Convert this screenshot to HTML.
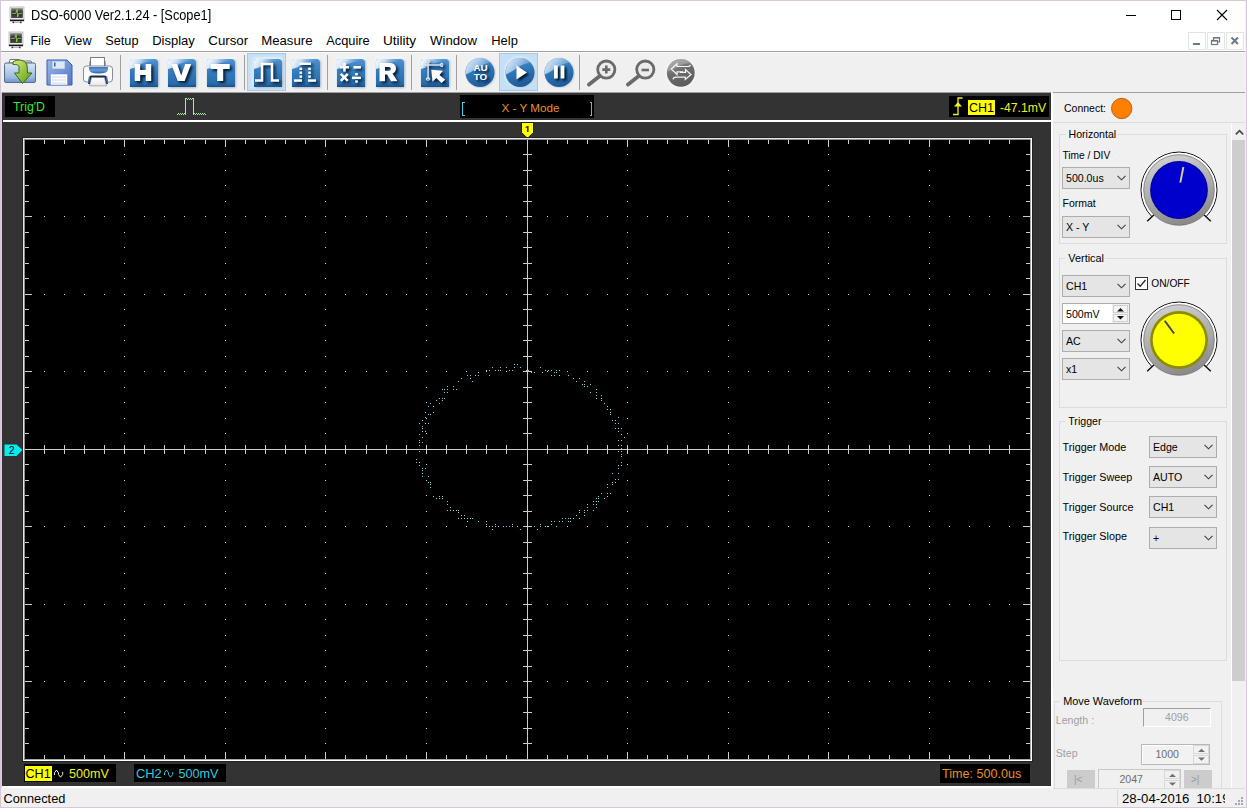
<!DOCTYPE html><html><head><meta charset="utf-8"><style>
*{margin:0;padding:0;box-sizing:border-box}
html,body{width:1247px;height:808px;overflow:hidden;background:#fff;font-family:"Liberation Sans",sans-serif}
.t{position:absolute;line-height:1;white-space:nowrap}
.r{position:absolute}
svg{position:absolute;left:0;top:0}
</style></head><body><div class="r" style="left:0px;top:0px;width:1247px;height:808px;background:#ffffff"></div>
<svg style="left:6px;top:4px" width="22" height="22" viewBox="0 0 22 22">
<defs><linearGradient id="mg64" x1="0" y1="0" x2="0" y2="1"><stop offset="0" stop-color="#8a8a8a"/><stop offset="0.45" stop-color="#262626"/><stop offset="1" stop-color="#4a4a4a"/></linearGradient></defs>
<rect x="4" y="3" width="14" height="14" fill="#ececec" stroke="#a0a0a0" stroke-width="0.6"/>
<rect x="5.2" y="4.2" width="11.6" height="9.8" fill="url(#mg64)"/>
<path d="M5.8 9.3 H9.8 L10.6 7 L11.1 5.2 L11.6 13 L12.4 10.2 L12.9 9.3 H16.2" fill="none" stroke="#86c850" stroke-width="1"/>
<rect x="4" y="15.6" width="14" height="1.5" fill="#141414"/>
<rect x="7" y="18" width="8" height="1" fill="#b8b8b8"/>
<rect x="6.5" y="17.6" width="1.6" height="1.6" fill="#333"/><rect x="14" y="17.6" width="1.6" height="1.6" fill="#333"/>
</svg>
<svg style="left:5px;top:29px" width="22" height="22" viewBox="0 0 22 22">
<defs><linearGradient id="mg529" x1="0" y1="0" x2="0" y2="1"><stop offset="0" stop-color="#8a8a8a"/><stop offset="0.45" stop-color="#262626"/><stop offset="1" stop-color="#4a4a4a"/></linearGradient></defs>
<rect x="4" y="3" width="14" height="14" fill="#ececec" stroke="#a0a0a0" stroke-width="0.6"/>
<rect x="5.2" y="4.2" width="11.6" height="9.8" fill="url(#mg529)"/>
<path d="M5.8 9.3 H9.8 L10.6 7 L11.1 5.2 L11.6 13 L12.4 10.2 L12.9 9.3 H16.2" fill="none" stroke="#86c850" stroke-width="1"/>
<rect x="4" y="15.6" width="14" height="1.5" fill="#141414"/>
<rect x="7" y="18" width="8" height="1" fill="#b8b8b8"/>
<rect x="6.5" y="17.6" width="1.6" height="1.6" fill="#333"/><rect x="14" y="17.6" width="1.6" height="1.6" fill="#333"/>
</svg>
<div class="t " style="left:30.5px;top:8.67px;font-size:13.8px;color:#000;transform:scaleX(0.925);transform-origin:0 0">DSO-6000 Ver2.1.24 - [Scope1]</div>
<div class="r" style="left:1126px;top:15px;width:10px;height:1px;background:#000"></div>
<div class="r" style="left:1171px;top:10px;width:10px;height:10px;border:1px solid #000"></div>
<svg style="left:1216px;top:9px" width="12" height="12" viewBox="0 0 12 12"><path d="M1 1 L11 11 M11 1 L1 11" stroke="#000" stroke-width="1.1"/></svg>
<div class="t " style="left:30.6px;top:34.96px;font-size:12.4px;color:#000;">File</div>
<div class="t " style="left:64.3px;top:34.70px;font-size:12.7px;color:#000;">View</div>
<div class="t " style="left:105.3px;top:34.70px;font-size:12.7px;color:#000;">Setup</div>
<div class="t " style="left:152.2px;top:34.45px;font-size:13.0px;color:#000;">Display</div>
<div class="t " style="left:208.3px;top:34.20px;font-size:13.3px;color:#000;">Cursor</div>
<div class="t " style="left:261.2px;top:34.28px;font-size:13.2px;color:#000;">Measure</div>
<div class="t " style="left:326.3px;top:34.62px;font-size:12.8px;color:#000;">Acquire</div>
<div class="t " style="left:382.9px;top:33.94px;font-size:13.6px;color:#000;">Utility</div>
<div class="t " style="left:430px;top:34.28px;font-size:13.2px;color:#000;">Window</div>
<div class="t " style="left:491.3px;top:34.53px;font-size:12.9px;color:#000;">Help</div>
<div class="r" style="left:1188px;top:32px;width:18px;height:18px;border:1px solid #e3e3e3;background:#fff"></div>
<div class="r" style="left:1207px;top:32px;width:18px;height:18px;border:1px solid #e3e3e3;background:#fff"></div>
<div class="r" style="left:1226px;top:32px;width:18px;height:18px;border:1px solid #e3e3e3;background:#fff"></div>
<div class="r" style="left:1193px;top:43px;width:7px;height:2px;background:#6d7885"></div>
<svg style="left:1210px;top:36px" width="12" height="10" viewBox="0 0 12 10"><rect x="1.5" y="4.5" width="6" height="4" fill="none" stroke="#6d7885" stroke-width="1.2"/><path d="M3.5 4.5 V1.5 H9.5 V6 H7.5" fill="none" stroke="#6d7885" stroke-width="1.2"/><rect x="1" y="4" width="7" height="1.6" fill="#6d7885"/><rect x="3" y="1" width="7" height="1.6" fill="#6d7885"/></svg>
<svg style="left:1229px;top:35px" width="12" height="12" viewBox="0 0 12 12"><path d="M2.5 2.5 L9 9 M9 2.5 L2.5 9" stroke="#6d7885" stroke-width="2"/></svg>
<div class="r" style="left:0px;top:51px;width:1247px;height:1px;background:#a0a0a0"></div>
<div class="r" style="left:1px;top:52px;width:1246px;height:41px;background:#f0f0f0"></div>
<div class="r" style="left:1px;top:52px;width:1245px;height:1px;background:#fbfbfb"></div>
<div class="r" style="left:120px;top:55px;width:1px;height:35px;background:#a0a0a0"></div>
<div class="r" style="left:244px;top:55px;width:1px;height:35px;background:#a0a0a0"></div>
<div class="r" style="left:327px;top:55px;width:1px;height:35px;background:#a0a0a0"></div>
<div class="r" style="left:411px;top:55px;width:1px;height:35px;background:#a0a0a0"></div>
<div class="r" style="left:456px;top:55px;width:1px;height:35px;background:#a0a0a0"></div>
<div class="r" style="left:579px;top:55px;width:1px;height:35px;background:#a0a0a0"></div>
<div class="r" style="left:247px;top:53px;width:39px;height:38px;background:#c5e0f5;border:1px solid #a4c8e6"></div>
<div class="r" style="left:499px;top:53px;width:39px;height:38px;background:#c5e0f5;border:1px solid #a4c8e6"></div>
<svg style="left:3px;top:56px" width="34" height="30" viewBox="0 0 34 30">
<defs>
<linearGradient id="fold" x1="0" y1="0" x2="0" y2="1"><stop offset="0" stop-color="#d8e6f4"/><stop offset="0.6" stop-color="#9dbde4"/><stop offset="1" stop-color="#6f9bd2"/></linearGradient>
<linearGradient id="arr" x1="0" y1="0" x2="1" y2="1"><stop offset="0" stop-color="#d6ee7a"/><stop offset="1" stop-color="#5a9a10"/></linearGradient>
</defs>
<path d="M7 3.5 H16 L17 5 H28 L29 7 H6 Z" fill="#fafafa" stroke="#777" stroke-width="1"/>
<rect x="1.5" y="7" width="31" height="19.5" rx="1.5" fill="url(#fold)" stroke="#5a6d86" stroke-width="1"/>
<g stroke="#ffffff" stroke-opacity="0.35" stroke-width="0.6">
<path d="M3 10H31M3 12H31M3 14H31M3 16H31M3 18H31M3 20H31M3 22H31"/></g>
<path d="M10 6 C14 3, 22 3, 24 9 L24.5 17 H29 L19.5 27.5 L11.5 17 H16 L16 11 C16 8.5, 13 8.5, 10 8.5 Z" fill="url(#arr)" stroke="#3b6a12" stroke-width="1"/>
</svg>
<svg style="left:46px;top:59px" width="27" height="27" viewBox="0 0 27 27">
<defs><linearGradient id="flp" x1="0" y1="0" x2="1" y2="1"><stop offset="0" stop-color="#9ab7e8"/><stop offset="1" stop-color="#4f78c8"/></linearGradient></defs>
<path d="M1 1 H21 L26 6 V26 H1 Z" fill="url(#flp)" stroke="#3a5fb0" stroke-width="1"/>
<rect x="6" y="2" width="13" height="8" fill="#dfe8f6" stroke="#7d9bd0" stroke-width="0.6"/>
<rect x="8" y="3.5" width="1.5" height="4" fill="#3a5fb0"/>
<rect x="4.5" y="15" width="17" height="11" fill="#ffffff" stroke="#6e8fce" stroke-width="0.6"/>
<path d="M6 18H20M6 21H20M6 24H20" stroke="#c0cce6" stroke-width="0.8"/>
</svg>
<svg style="left:78px;top:52px" width="40" height="40" viewBox="0 0 40 40">
<defs><linearGradient id="prt" x1="0" y1="0" x2="0" y2="1"><stop offset="0" stop-color="#3f74bd"/><stop offset="0.5" stop-color="#6a9ad6"/><stop offset="1" stop-color="#2c5fa6"/></linearGradient>
<linearGradient id="ppr" x1="0" y1="0" x2="0" y2="1"><stop offset="0" stop-color="#fff"/><stop offset="1" stop-color="#e8e8e8"/></linearGradient></defs>
<rect x="11.5" y="8.5" width="16" height="14" rx="1.5" fill="#3c6db5"/>
<rect x="12.6" y="5.5" width="13.8" height="9.5" fill="#fff" stroke="#6a6f78" stroke-width="0.9"/>
<rect x="5.5" y="14" width="29" height="16" rx="3" fill="#fcfcfc" stroke="#7a808a" stroke-width="0.9"/>
<path d="M11 15 H30 V17 Q30 21.5 20.5 21.5 Q11 21.5 11 17 Z" fill="url(#prt)"/>
<path d="M11.5 24.5 Q12 23.5 14 23.5 H26 Q28 23.5 28.5 24.5 L30 32 H10 Z" fill="#1a2a40"/>
<path d="M13.5 25.5 H26.5 L28.5 33.8 H11.5 Z" fill="url(#ppr)" stroke="#7a808a" stroke-width="0.6"/>
<path d="M11.6 25 L10.6 31 M28.4 25 L29.4 31" stroke="#3a6ab0" stroke-width="1.6"/>
</svg>
<svg style="left:125.5px;top:54.5px" width="36" height="36" viewBox="-4 -4 36 36">
<defs>
<linearGradient id="bqh" x1="0" y1="0" x2="0" y2="1"><stop offset="0" stop-color="#4c90d0"/><stop offset="0.55" stop-color="#3079ba"/><stop offset="0.88" stop-color="#2a6cab"/><stop offset="1" stop-color="#1a4f86"/></linearGradient>
<linearGradient id="hlh" x1="0" y1="0" x2="1" y2="0.2"><stop offset="0" stop-color="#ffffff" stop-opacity="1"/><stop offset="0.35" stop-color="#dceaf8" stop-opacity="0.85"/><stop offset="0.75" stop-color="#7fb0e0" stop-opacity="0.3"/><stop offset="1" stop-color="#4c90d0" stop-opacity="0"/></linearGradient>
<filter id="glh" x="-30%" y="-30%" width="160%" height="160%"><feGaussianBlur stdDeviation="1"/></filter>
<filter id="shh" x="-30%" y="-30%" width="160%" height="160%"><feGaussianBlur in="SourceAlpha" stdDeviation="1.4" result="b"/><feOffset in="b" dx="1.6" dy="1.6" result="o"/><feFlood flood-color="#041526" flood-opacity="1"/><feComposite operator="in" in2="o"/></filter>
</defs>
<rect x="-1.5" y="-1.5" width="31" height="31" rx="4" fill="#f4f9ff" opacity="0.9" filter="url(#glh)"/>
<rect x="0.5" y="1" width="28.5" height="28" rx="2" fill="#1d3c5c" opacity="0.35" filter="url(#glh)"/>
<path d="M0 3 Q0 0 3 0 H24 Q28 0 28 4 V28 H0 Z" fill="url(#bqh)"/>
<path d="M0 3 Q0 0 3 0 H24 Q28 0 28 2.5 Q16 1.5 8 7 Q5 9 0 10 Z" fill="url(#hlh)"/>
<g transform="translate(-2,-2)"><g filter="url(#shh)"><path transform="translate(-0.8,-0.6)" d="M7.5 7.5 H13 V13.5 H18.5 V7.5 H24 V24.5 H18.5 V18.5 H13 V24.5 H7.5 Z" fill="#fff"/></g><path transform="translate(-0.8,-0.6)" d="M7.5 7.5 H13 V13.5 H18.5 V7.5 H24 V24.5 H18.5 V18.5 H13 V24.5 H7.5 Z" fill="#fff"/></g>
</svg>
<svg style="left:164.3px;top:54.5px" width="36" height="36" viewBox="-4 -4 36 36">
<defs>
<linearGradient id="bqv" x1="0" y1="0" x2="0" y2="1"><stop offset="0" stop-color="#4c90d0"/><stop offset="0.55" stop-color="#3079ba"/><stop offset="0.88" stop-color="#2a6cab"/><stop offset="1" stop-color="#1a4f86"/></linearGradient>
<linearGradient id="hlv" x1="0" y1="0" x2="1" y2="0.2"><stop offset="0" stop-color="#ffffff" stop-opacity="1"/><stop offset="0.35" stop-color="#dceaf8" stop-opacity="0.85"/><stop offset="0.75" stop-color="#7fb0e0" stop-opacity="0.3"/><stop offset="1" stop-color="#4c90d0" stop-opacity="0"/></linearGradient>
<filter id="glv" x="-30%" y="-30%" width="160%" height="160%"><feGaussianBlur stdDeviation="1"/></filter>
<filter id="shv" x="-30%" y="-30%" width="160%" height="160%"><feGaussianBlur in="SourceAlpha" stdDeviation="1.4" result="b"/><feOffset in="b" dx="1.6" dy="1.6" result="o"/><feFlood flood-color="#041526" flood-opacity="1"/><feComposite operator="in" in2="o"/></filter>
</defs>
<rect x="-1.5" y="-1.5" width="31" height="31" rx="4" fill="#f4f9ff" opacity="0.9" filter="url(#glv)"/>
<rect x="0.5" y="1" width="28.5" height="28" rx="2" fill="#1d3c5c" opacity="0.35" filter="url(#glv)"/>
<path d="M0 3 Q0 0 3 0 H24 Q28 0 28 4 V28 H0 Z" fill="url(#bqv)"/>
<path d="M0 3 Q0 0 3 0 H24 Q28 0 28 2.5 Q16 1.5 8 7 Q5 9 0 10 Z" fill="url(#hlv)"/>
<g transform="translate(-2,-2)"><g filter="url(#shv)"><path transform="translate(-0.8,-0.6)" d="M6 7.5 H12 L16 19 L20 7.5 H26 L19.5 24.5 H12.5 Z" fill="#fff"/></g><path transform="translate(-0.8,-0.6)" d="M6 7.5 H12 L16 19 L20 7.5 H26 L19.5 24.5 H12.5 Z" fill="#fff"/></g>
</svg>
<svg style="left:203px;top:54.5px" width="36" height="36" viewBox="-4 -4 36 36">
<defs>
<linearGradient id="bqt" x1="0" y1="0" x2="0" y2="1"><stop offset="0" stop-color="#4c90d0"/><stop offset="0.55" stop-color="#3079ba"/><stop offset="0.88" stop-color="#2a6cab"/><stop offset="1" stop-color="#1a4f86"/></linearGradient>
<linearGradient id="hlt" x1="0" y1="0" x2="1" y2="0.2"><stop offset="0" stop-color="#ffffff" stop-opacity="1"/><stop offset="0.35" stop-color="#dceaf8" stop-opacity="0.85"/><stop offset="0.75" stop-color="#7fb0e0" stop-opacity="0.3"/><stop offset="1" stop-color="#4c90d0" stop-opacity="0"/></linearGradient>
<filter id="glt" x="-30%" y="-30%" width="160%" height="160%"><feGaussianBlur stdDeviation="1"/></filter>
<filter id="sht" x="-30%" y="-30%" width="160%" height="160%"><feGaussianBlur in="SourceAlpha" stdDeviation="1.4" result="b"/><feOffset in="b" dx="1.6" dy="1.6" result="o"/><feFlood flood-color="#041526" flood-opacity="1"/><feComposite operator="in" in2="o"/></filter>
</defs>
<rect x="-1.5" y="-1.5" width="31" height="31" rx="4" fill="#f4f9ff" opacity="0.9" filter="url(#glt)"/>
<rect x="0.5" y="1" width="28.5" height="28" rx="2" fill="#1d3c5c" opacity="0.35" filter="url(#glt)"/>
<path d="M0 3 Q0 0 3 0 H24 Q28 0 28 4 V28 H0 Z" fill="url(#bqt)"/>
<path d="M0 3 Q0 0 3 0 H24 Q28 0 28 2.5 Q16 1.5 8 7 Q5 9 0 10 Z" fill="url(#hlt)"/>
<g transform="translate(-2,-2)"><g filter="url(#sht)"><path transform="translate(-0.8,-0.6)" d="M6.5 7.5 H25.5 V12.5 H19 V24.5 H13 V12.5 H6.5 Z" fill="#fff"/></g><path transform="translate(-0.8,-0.6)" d="M6.5 7.5 H25.5 V12.5 H19 V24.5 H13 V12.5 H6.5 Z" fill="#fff"/></g>
</svg>
<svg style="left:249.5px;top:55px" width="36" height="36" viewBox="-4 -4 36 36">
<defs>
<linearGradient id="bqsq" x1="0" y1="0" x2="0" y2="1"><stop offset="0" stop-color="#4c90d0"/><stop offset="0.55" stop-color="#3079ba"/><stop offset="0.88" stop-color="#2a6cab"/><stop offset="1" stop-color="#1a4f86"/></linearGradient>
<linearGradient id="hlsq" x1="0" y1="0" x2="1" y2="0.2"><stop offset="0" stop-color="#ffffff" stop-opacity="1"/><stop offset="0.35" stop-color="#dceaf8" stop-opacity="0.85"/><stop offset="0.75" stop-color="#7fb0e0" stop-opacity="0.3"/><stop offset="1" stop-color="#4c90d0" stop-opacity="0"/></linearGradient>
<filter id="glsq" x="-30%" y="-30%" width="160%" height="160%"><feGaussianBlur stdDeviation="1"/></filter>
<filter id="shsq" x="-30%" y="-30%" width="160%" height="160%"><feGaussianBlur in="SourceAlpha" stdDeviation="1.4" result="b"/><feOffset in="b" dx="1.6" dy="1.6" result="o"/><feFlood flood-color="#041526" flood-opacity="1"/><feComposite operator="in" in2="o"/></filter>
</defs>
<rect x="-1.5" y="-1.5" width="31" height="31" rx="4" fill="#f4f9ff" opacity="0.9" filter="url(#glsq)"/>
<rect x="0.5" y="1" width="28.5" height="28" rx="2" fill="#1d3c5c" opacity="0.35" filter="url(#glsq)"/>
<path d="M0 3 Q0 0 3 0 H24 Q28 0 28 4 V28 H0 Z" fill="url(#bqsq)"/>
<path d="M0 3 Q0 0 3 0 H24 Q28 0 28 2.5 Q16 1.5 8 7 Q5 9 0 10 Z" fill="url(#hlsq)"/>
<g transform="translate(-2,-2)"><g filter="url(#shsq)"><path d="M3 23.5 H10 V7 H20 V23.5 H27" fill="none" stroke="#fff" stroke-width="2.5"/></g><path d="M3 23.5 H10 V7 H20 V23.5 H27" fill="none" stroke="#fff" stroke-width="2.5"/></g>
</svg>
<svg style="left:287.5px;top:55px" width="36" height="36" viewBox="-4 -4 36 36">
<defs>
<linearGradient id="bqdsq" x1="0" y1="0" x2="0" y2="1"><stop offset="0" stop-color="#4c90d0"/><stop offset="0.55" stop-color="#3079ba"/><stop offset="0.88" stop-color="#2a6cab"/><stop offset="1" stop-color="#1a4f86"/></linearGradient>
<linearGradient id="hldsq" x1="0" y1="0" x2="1" y2="0.2"><stop offset="0" stop-color="#ffffff" stop-opacity="1"/><stop offset="0.35" stop-color="#dceaf8" stop-opacity="0.85"/><stop offset="0.75" stop-color="#7fb0e0" stop-opacity="0.3"/><stop offset="1" stop-color="#4c90d0" stop-opacity="0"/></linearGradient>
<filter id="gldsq" x="-30%" y="-30%" width="160%" height="160%"><feGaussianBlur stdDeviation="1"/></filter>
<filter id="shdsq" x="-30%" y="-30%" width="160%" height="160%"><feGaussianBlur in="SourceAlpha" stdDeviation="1.4" result="b"/><feOffset in="b" dx="1.6" dy="1.6" result="o"/><feFlood flood-color="#041526" flood-opacity="1"/><feComposite operator="in" in2="o"/></filter>
</defs>
<rect x="-1.5" y="-1.5" width="31" height="31" rx="4" fill="#f4f9ff" opacity="0.9" filter="url(#gldsq)"/>
<rect x="0.5" y="1" width="28.5" height="28" rx="2" fill="#1d3c5c" opacity="0.35" filter="url(#gldsq)"/>
<path d="M0 3 Q0 0 3 0 H24 Q28 0 28 4 V28 H0 Z" fill="url(#bqdsq)"/>
<path d="M0 3 Q0 0 3 0 H24 Q28 0 28 2.5 Q16 1.5 8 7 Q5 9 0 10 Z" fill="url(#hldsq)"/>
<g transform="translate(-2,-2)"><g filter="url(#shdsq)"><g fill="#fff"><rect x="4" y="22.3" width="8" height="2.5"/><rect x="18" y="22.3" width="8" height="2.5"/><rect x="9.5" y="5.5" width="11.5" height="2.5"/><rect x="9.5" y="10.6" width="2.6" height="2.4"/><rect x="9.5" y="14.5" width="2.6" height="2.4"/><rect x="9.5" y="18.4" width="2.6" height="2.4"/><rect x="18.2" y="10.6" width="2.6" height="2.4"/><rect x="18.2" y="14.5" width="2.6" height="2.4"/><rect x="18.2" y="18.4" width="2.6" height="2.4"/></g></g><g fill="#fff"><rect x="4" y="22.3" width="8" height="2.5"/><rect x="18" y="22.3" width="8" height="2.5"/><rect x="9.5" y="5.5" width="11.5" height="2.5"/><rect x="9.5" y="10.6" width="2.6" height="2.4"/><rect x="9.5" y="14.5" width="2.6" height="2.4"/><rect x="9.5" y="18.4" width="2.6" height="2.4"/><rect x="18.2" y="10.6" width="2.6" height="2.4"/><rect x="18.2" y="14.5" width="2.6" height="2.4"/><rect x="18.2" y="18.4" width="2.6" height="2.4"/></g></g>
</svg>
<svg style="left:332.5px;top:55px" width="36" height="36" viewBox="-4 -4 36 36">
<defs>
<linearGradient id="bqmath" x1="0" y1="0" x2="0" y2="1"><stop offset="0" stop-color="#4c90d0"/><stop offset="0.55" stop-color="#3079ba"/><stop offset="0.88" stop-color="#2a6cab"/><stop offset="1" stop-color="#1a4f86"/></linearGradient>
<linearGradient id="hlmath" x1="0" y1="0" x2="1" y2="0.2"><stop offset="0" stop-color="#ffffff" stop-opacity="1"/><stop offset="0.35" stop-color="#dceaf8" stop-opacity="0.85"/><stop offset="0.75" stop-color="#7fb0e0" stop-opacity="0.3"/><stop offset="1" stop-color="#4c90d0" stop-opacity="0"/></linearGradient>
<filter id="glmath" x="-30%" y="-30%" width="160%" height="160%"><feGaussianBlur stdDeviation="1"/></filter>
<filter id="shmath" x="-30%" y="-30%" width="160%" height="160%"><feGaussianBlur in="SourceAlpha" stdDeviation="1.4" result="b"/><feOffset in="b" dx="1.6" dy="1.6" result="o"/><feFlood flood-color="#041526" flood-opacity="1"/><feComposite operator="in" in2="o"/></filter>
</defs>
<rect x="-1.5" y="-1.5" width="31" height="31" rx="4" fill="#f4f9ff" opacity="0.9" filter="url(#glmath)"/>
<rect x="0.5" y="1" width="28.5" height="28" rx="2" fill="#1d3c5c" opacity="0.35" filter="url(#glmath)"/>
<path d="M0 3 Q0 0 3 0 H24 Q28 0 28 4 V28 H0 Z" fill="url(#bqmath)"/>
<path d="M0 3 Q0 0 3 0 H24 Q28 0 28 2.5 Q16 1.5 8 7 Q5 9 0 10 Z" fill="url(#hlmath)"/>
<g transform="translate(-2,-2)"><g filter="url(#shmath)"><g fill="#fff"><rect x="5" y="8.9" width="9" height="2.6"/><rect x="8.2" y="5.8" width="2.6" height="8.8"/><rect x="18.5" y="9" width="7.5" height="2.6"/><path d="M5.8 16.8 L12.8 23.8 M12.8 16.8 L5.8 23.8" stroke="#fff" stroke-width="2.6"/><rect x="17" y="19.6" width="9" height="2.5"/><rect x="20.2" y="16" width="2.6" height="2.4"/><rect x="20.2" y="23.3" width="2.6" height="2.4"/></g></g><g fill="#fff"><rect x="5" y="8.9" width="9" height="2.6"/><rect x="8.2" y="5.8" width="2.6" height="8.8"/><rect x="18.5" y="9" width="7.5" height="2.6"/><path d="M5.8 16.8 L12.8 23.8 M12.8 16.8 L5.8 23.8" stroke="#fff" stroke-width="2.6"/><rect x="17" y="19.6" width="9" height="2.5"/><rect x="20.2" y="16" width="2.6" height="2.4"/><rect x="20.2" y="23.3" width="2.6" height="2.4"/></g></g>
</svg>
<svg style="left:371.5px;top:55px" width="36" height="36" viewBox="-4 -4 36 36">
<defs>
<linearGradient id="bqr" x1="0" y1="0" x2="0" y2="1"><stop offset="0" stop-color="#4c90d0"/><stop offset="0.55" stop-color="#3079ba"/><stop offset="0.88" stop-color="#2a6cab"/><stop offset="1" stop-color="#1a4f86"/></linearGradient>
<linearGradient id="hlr" x1="0" y1="0" x2="1" y2="0.2"><stop offset="0" stop-color="#ffffff" stop-opacity="1"/><stop offset="0.35" stop-color="#dceaf8" stop-opacity="0.85"/><stop offset="0.75" stop-color="#7fb0e0" stop-opacity="0.3"/><stop offset="1" stop-color="#4c90d0" stop-opacity="0"/></linearGradient>
<filter id="glr" x="-30%" y="-30%" width="160%" height="160%"><feGaussianBlur stdDeviation="1"/></filter>
<filter id="shr" x="-30%" y="-30%" width="160%" height="160%"><feGaussianBlur in="SourceAlpha" stdDeviation="1.4" result="b"/><feOffset in="b" dx="1.6" dy="1.6" result="o"/><feFlood flood-color="#041526" flood-opacity="1"/><feComposite operator="in" in2="o"/></filter>
</defs>
<rect x="-1.5" y="-1.5" width="31" height="31" rx="4" fill="#f4f9ff" opacity="0.9" filter="url(#glr)"/>
<rect x="0.5" y="1" width="28.5" height="28" rx="2" fill="#1d3c5c" opacity="0.35" filter="url(#glr)"/>
<path d="M0 3 Q0 0 3 0 H24 Q28 0 28 4 V28 H0 Z" fill="url(#bqr)"/>
<path d="M0 3 Q0 0 3 0 H24 Q28 0 28 2.5 Q16 1.5 8 7 Q5 9 0 10 Z" fill="url(#hlr)"/>
<g transform="translate(-2,-2)"><g filter="url(#shr)"><path d="M5.5 6 H15.5 Q22 6 22 11.5 Q22 15 18.5 16.5 L23.5 24.3 H17 L13 17.5 H11 V24.3 H5.5 Z M11 10 V13.8 H15 Q16.8 13.8 16.8 11.9 Q16.8 10 15 10 Z" fill="#fff" fill-rule="evenodd"/></g><path d="M5.5 6 H15.5 Q22 6 22 11.5 Q22 15 18.5 16.5 L23.5 24.3 H17 L13 17.5 H11 V24.3 H5.5 Z M11 10 V13.8 H15 Q16.8 13.8 16.8 11.9 Q16.8 10 15 10 Z" fill="#fff" fill-rule="evenodd"/></g>
</svg>
<svg style="left:416.5px;top:55px" width="36" height="36" viewBox="-4 -4 36 36">
<defs>
<linearGradient id="bqcur" x1="0" y1="0" x2="0" y2="1"><stop offset="0" stop-color="#4c90d0"/><stop offset="0.55" stop-color="#3079ba"/><stop offset="0.88" stop-color="#2a6cab"/><stop offset="1" stop-color="#1a4f86"/></linearGradient>
<linearGradient id="hlcur" x1="0" y1="0" x2="1" y2="0.2"><stop offset="0" stop-color="#ffffff" stop-opacity="1"/><stop offset="0.35" stop-color="#dceaf8" stop-opacity="0.85"/><stop offset="0.75" stop-color="#7fb0e0" stop-opacity="0.3"/><stop offset="1" stop-color="#4c90d0" stop-opacity="0"/></linearGradient>
<filter id="glcur" x="-30%" y="-30%" width="160%" height="160%"><feGaussianBlur stdDeviation="1"/></filter>
<filter id="shcur" x="-30%" y="-30%" width="160%" height="160%"><feGaussianBlur in="SourceAlpha" stdDeviation="1.4" result="b"/><feOffset in="b" dx="1.6" dy="1.6" result="o"/><feFlood flood-color="#041526" flood-opacity="1"/><feComposite operator="in" in2="o"/></filter>
</defs>
<rect x="-1.5" y="-1.5" width="31" height="31" rx="4" fill="#f4f9ff" opacity="0.9" filter="url(#glcur)"/>
<rect x="0.5" y="1" width="28.5" height="28" rx="2" fill="#1d3c5c" opacity="0.35" filter="url(#glcur)"/>
<path d="M0 3 Q0 0 3 0 H24 Q28 0 28 4 V28 H0 Z" fill="url(#bqcur)"/>
<path d="M0 3 Q0 0 3 0 H24 Q28 0 28 2.5 Q16 1.5 8 7 Q5 9 0 10 Z" fill="url(#hlcur)"/>
<g transform="translate(-2,-2)"><g filter="url(#shcur)"><g><path d="M9.1 4.4 V22 M4.5 8.1 H22.7" stroke="#d4e6f6" stroke-width="1.5" fill="none"/><ellipse cx="9.1" cy="4.4" rx="1.8" ry="1.1" fill="none" stroke="#d4e6f6" stroke-width="1.1"/><ellipse cx="9.1" cy="22" rx="1.8" ry="1.1" fill="none" stroke="#d4e6f6" stroke-width="1.1"/><ellipse cx="22.7" cy="8.1" rx="1.1" ry="1.7" fill="none" stroke="#d4e6f6" stroke-width="1.1"/><path d="M12.3 12.8 L24 13.8 L20.5 18 L26.2 22.8 L22.5 26 L17.3 21 L13.5 24.7 Z" fill="#fff"/></g></g><g><path d="M9.1 4.4 V22 M4.5 8.1 H22.7" stroke="#d4e6f6" stroke-width="1.5" fill="none"/><ellipse cx="9.1" cy="4.4" rx="1.8" ry="1.1" fill="none" stroke="#d4e6f6" stroke-width="1.1"/><ellipse cx="9.1" cy="22" rx="1.8" ry="1.1" fill="none" stroke="#d4e6f6" stroke-width="1.1"/><ellipse cx="22.7" cy="8.1" rx="1.1" ry="1.7" fill="none" stroke="#d4e6f6" stroke-width="1.1"/><path d="M12.3 12.8 L24 13.8 L20.5 18 L26.2 22.8 L22.5 26 L17.3 21 L13.5 24.7 Z" fill="#fff"/></g></g>
</svg>
<svg style="left:463.5px;top:56px" width="32" height="32" viewBox="0 0 32 32">
<defs>
<linearGradient id="bcauto" x1="0" y1="0" x2="0.3" y2="1"><stop offset="0" stop-color="#5a9ad6"/><stop offset="0.5" stop-color="#3079ba"/><stop offset="1" stop-color="#1f5c9a"/></linearGradient>
<linearGradient id="chlauto" x1="0" y1="0" x2="1" y2="0.4"><stop offset="0" stop-color="#ffffff" stop-opacity="0.9"/><stop offset="0.5" stop-color="#d0e4f6" stop-opacity="0.7"/><stop offset="1" stop-color="#9cc4ea" stop-opacity="0.35"/></linearGradient>
<filter id="cglauto" x="-30%" y="-30%" width="160%" height="160%"><feGaussianBlur stdDeviation="0.9"/></filter>
<filter id="cshauto" x="-30%" y="-30%" width="160%" height="160%"><feGaussianBlur in="SourceAlpha" stdDeviation="1.3" result="b"/><feOffset in="b" dx="1.5" dy="1.5" result="o"/><feFlood flood-color="#041526"/><feComposite operator="in" in2="o"/></filter>
</defs>
<circle cx="16" cy="16.5" r="15.6" fill="#f6f9fc" filter="url(#cglauto)"/>
<circle cx="16.6" cy="17" r="14.6" fill="#1d3c5c" opacity="0.3" filter="url(#cglauto)"/>
<circle cx="16" cy="16.5" r="14.5" fill="url(#bcauto)"/>
<path d="M1.7 18.5 A14.5 14.5 0 0 1 26.5 6.5 Q18 8 12 12.5 Q7 16.5 1.7 18.5 Z" fill="url(#chlauto)"/>
<g filter="url(#cshauto)"><text x="16.5" y="15.3" text-anchor="middle" font-family="Liberation Sans" font-weight="bold" font-size="9.8" fill="#fff">AU</text><text x="16.5" y="24.2" text-anchor="middle" font-family="Liberation Sans" font-weight="bold" font-size="9.8" fill="#fff">TO</text></g><text x="16.5" y="15.3" text-anchor="middle" font-family="Liberation Sans" font-weight="bold" font-size="9.8" fill="#fff">AU</text><text x="16.5" y="24.2" text-anchor="middle" font-family="Liberation Sans" font-weight="bold" font-size="9.8" fill="#fff">TO</text>
</svg>
<svg style="left:503.5px;top:56px" width="32" height="32" viewBox="0 0 32 32">
<defs>
<linearGradient id="bcplay" x1="0" y1="0" x2="0.3" y2="1"><stop offset="0" stop-color="#5a9ad6"/><stop offset="0.5" stop-color="#3079ba"/><stop offset="1" stop-color="#1f5c9a"/></linearGradient>
<linearGradient id="chlplay" x1="0" y1="0" x2="1" y2="0.4"><stop offset="0" stop-color="#ffffff" stop-opacity="0.9"/><stop offset="0.5" stop-color="#d0e4f6" stop-opacity="0.7"/><stop offset="1" stop-color="#9cc4ea" stop-opacity="0.35"/></linearGradient>
<filter id="cglplay" x="-30%" y="-30%" width="160%" height="160%"><feGaussianBlur stdDeviation="0.9"/></filter>
<filter id="cshplay" x="-30%" y="-30%" width="160%" height="160%"><feGaussianBlur in="SourceAlpha" stdDeviation="1.3" result="b"/><feOffset in="b" dx="1.5" dy="1.5" result="o"/><feFlood flood-color="#041526"/><feComposite operator="in" in2="o"/></filter>
</defs>
<circle cx="16" cy="16.5" r="15.6" fill="#f6f9fc" filter="url(#cglplay)"/>
<circle cx="16.6" cy="17" r="14.6" fill="#1d3c5c" opacity="0.3" filter="url(#cglplay)"/>
<circle cx="16" cy="16.5" r="14.5" fill="url(#bcplay)"/>
<path d="M1.7 18.5 A14.5 14.5 0 0 1 26.5 6.5 Q18 8 12 12.5 Q7 16.5 1.7 18.5 Z" fill="url(#chlplay)"/>
<g filter="url(#cshplay)"><path d="M12.5 9.5 L23 16.5 L12.5 23.5 Z" fill="#fff"/></g><path d="M12.5 9.5 L23 16.5 L12.5 23.5 Z" fill="#fff"/>
</svg>
<svg style="left:542.5px;top:56px" width="32" height="32" viewBox="0 0 32 32">
<defs>
<linearGradient id="bcpause" x1="0" y1="0" x2="0.3" y2="1"><stop offset="0" stop-color="#5a9ad6"/><stop offset="0.5" stop-color="#3079ba"/><stop offset="1" stop-color="#1f5c9a"/></linearGradient>
<linearGradient id="chlpause" x1="0" y1="0" x2="1" y2="0.4"><stop offset="0" stop-color="#ffffff" stop-opacity="0.9"/><stop offset="0.5" stop-color="#d0e4f6" stop-opacity="0.7"/><stop offset="1" stop-color="#9cc4ea" stop-opacity="0.35"/></linearGradient>
<filter id="cglpause" x="-30%" y="-30%" width="160%" height="160%"><feGaussianBlur stdDeviation="0.9"/></filter>
<filter id="cshpause" x="-30%" y="-30%" width="160%" height="160%"><feGaussianBlur in="SourceAlpha" stdDeviation="1.3" result="b"/><feOffset in="b" dx="1.5" dy="1.5" result="o"/><feFlood flood-color="#041526"/><feComposite operator="in" in2="o"/></filter>
</defs>
<circle cx="16" cy="16.5" r="15.6" fill="#f6f9fc" filter="url(#cglpause)"/>
<circle cx="16.6" cy="17" r="14.6" fill="#1d3c5c" opacity="0.3" filter="url(#cglpause)"/>
<circle cx="16" cy="16.5" r="14.5" fill="url(#bcpause)"/>
<path d="M1.7 18.5 A14.5 14.5 0 0 1 26.5 6.5 Q18 8 12 12.5 Q7 16.5 1.7 18.5 Z" fill="url(#chlpause)"/>
<g filter="url(#cshpause)"><rect x="11" y="9.5" width="3.8" height="13" fill="#fff"/><rect x="17.6" y="9.5" width="3.8" height="13" fill="#fff"/></g><rect x="11" y="9.5" width="3.8" height="13" fill="#fff"/><rect x="17.6" y="9.5" width="3.8" height="13" fill="#fff"/>
</svg>
<svg style="left:586px;top:57px" width="32" height="30" viewBox="0 0 32 30">
<circle cx="20.3" cy="12.6" r="8.6" fill="#ececec" stroke="#6a6a6a" stroke-width="2.8"/>
<path d="M13.8 19 L3 27.5" stroke="#6a6a6a" stroke-width="3.8" stroke-linecap="round"/>
<path d="M16.3 12.6 H24.3 M20.3 8.6 V16.6" stroke="#6a6a6a" stroke-width="2.6"/>
</svg>
<svg style="left:625px;top:57px" width="32" height="30" viewBox="0 0 32 30">
<circle cx="20.3" cy="12.6" r="8.6" fill="#ececec" stroke="#6a6a6a" stroke-width="2.8"/>
<path d="M13.8 19 L3 27.5" stroke="#6a6a6a" stroke-width="3.8" stroke-linecap="round"/>
<path d="M16.5 13 H24" stroke="#6a6a6a" stroke-width="2.6"/>
</svg>
<svg style="left:665px;top:56px" width="32" height="32" viewBox="0 0 32 32">
<defs><linearGradient id="sw" x1="0.2" y1="0" x2="0.6" y2="1"><stop offset="0" stop-color="#a0a0a0"/><stop offset="0.45" stop-color="#6e6e6e"/><stop offset="1" stop-color="#5a5a5a"/></linearGradient>
<filter id="swg" x="-30%" y="-30%" width="160%" height="160%"><feGaussianBlur stdDeviation="0.9"/></filter></defs>
<circle cx="15.8" cy="17" r="15.2" fill="#f4f4f4" filter="url(#swg)"/>
<circle cx="15.8" cy="16.8" r="13.9" fill="url(#sw)"/>
<path d="M2.5 14 A13.9 13.9 0 0 1 26 7 Q16 7.5 10 12 Q6 15 2.5 15.5 Z" fill="#b8b8b8" opacity="0.5"/>
<path d="M25.5 9 Q25 10.5 23 10.5 H12 V7.7 L6.3 13 L12 18.5 V15.8 H18" fill="none" stroke="#f4f4f4" stroke-width="1.2"/>
<path d="M8 23.3 Q8.5 21.2 11 21.2 H20.3 V23.5 L26 18.5 L20.5 13.5 V16.3 H15" fill="none" stroke="#f4f4f4" stroke-width="1.2"/>
</svg>
<div class="r" style="left:2px;top:92px;width:1049px;height:694px;background:#333333"></div>
<div class="r" style="left:2px;top:92px;width:1049px;height:1px;background:#a0a0a0"></div>
<div class="r" style="left:1px;top:92px;width:1px;height:696px;background:#d8d0d8"></div>
<div class="r" style="left:1051px;top:93px;width:2px;height:695px;background:#ffffff"></div>
<div class="r" style="left:2px;top:786px;width:1051px;height:2px;background:#ffffff"></div>
<div class="r" style="left:5px;top:96px;width:50px;height:21px;background:#000"></div>
<div class="t " style="left:13px;top:101.14px;font-size:12.3px;color:#33ee33;">Trig'D</div>
<svg width="1247" height="808" style="left:0;top:0" shape-rendering="crispEdges"><g fill="#9cf29c"><rect x="177" y="114" width="1" height="1"/><rect x="178" y="113" width="1" height="1"/><rect x="179" y="114" width="1" height="1"/><rect x="180" y="113" width="1" height="1"/><rect x="181" y="114" width="1" height="1"/><rect x="182" y="113" width="1" height="1"/><rect x="183" y="114" width="1" height="1"/><rect x="184" y="113" width="1" height="1"/><rect x="185" y="114" width="1" height="1"/><rect x="193" y="114" width="1" height="1"/><rect x="194" y="113" width="1" height="1"/><rect x="195" y="114" width="1" height="1"/><rect x="196" y="113" width="1" height="1"/><rect x="197" y="114" width="1" height="1"/><rect x="198" y="113" width="1" height="1"/><rect x="199" y="114" width="1" height="1"/><rect x="200" y="113" width="1" height="1"/><rect x="201" y="114" width="1" height="1"/><rect x="202" y="113" width="1" height="1"/><rect x="203" y="114" width="1" height="1"/><rect x="204" y="113" width="1" height="1"/><rect x="205" y="114" width="1" height="1"/><rect x="186" y="98" width="1" height="1"/><rect x="187" y="99" width="1" height="1"/><rect x="188" y="98" width="1" height="1"/><rect x="189" y="99" width="1" height="1"/><rect x="190" y="98" width="1" height="1"/><rect x="191" y="99" width="1" height="1"/><rect x="192" y="98" width="1" height="1"/><rect x="185" y="98" width="1" height="16"/><rect x="193" y="98" width="1" height="16"/></g></svg>
<div class="r" style="left:460px;top:95px;width:134px;height:23px;background:#000"></div>
<svg style="left:460px;top:95px" width="134" height="23" viewBox="0 0 134 23" shape-rendering="crispEdges">
<path d="M4.5 7.5 H2.5 V20.5 H4.5 M129.5 7.5 H131.5 V20.5 H129.5" fill="none" stroke="#38d0e0" stroke-width="1"/>
</svg>
<div class="t " style="left:501.5px;top:102.26px;font-size:11.7px;color:#e8902c;">X - Y Mode</div>
<div class="r" style="left:949px;top:96px;width:100px;height:21px;background:#000"></div>
<svg style="left:952px;top:97px" width="12" height="19" viewBox="0 0 12 19">
<path d="M10.5 1 H6 V17.5 H1" fill="none" stroke="#f0f020" stroke-width="1.3"/>
<path d="M2 9.5 L6 5 L10 9.5 Z" fill="#f0f020"/>
</svg>
<div class="r" style="left:968px;top:100px;width:27px;height:15px;background:#ffff00"></div>
<div class="t " style="left:969px;top:101.88px;font-size:12.5px;color:#000;">CH1</div>
<div class="t " style="left:1000px;top:101.83px;font-size:12.2px;color:#f0f020;">-47.1mV</div>
<div class="r" style="left:3px;top:120px;width:1048px;height:2px;background:#ffffff"></div>
<svg style="left:520px;top:121px" width="16" height="18" viewBox="0 0 16 18">
<path d="M1.5 1.5 H13.5 V11.5 L7.5 17.3 L1.5 11.5 Z" fill="#ffff00" stroke="#111" stroke-width="0.9"/>
<path d="M7 5 H8.6 V11 H7 V6.6 L5.6 7.2 V6 Z" fill="#3a3000"/>
</svg>
<svg width="1247" height="808" style="left:0;top:0" shape-rendering="crispEdges"><rect x="22" y="137" width="1011" height="625" fill="#222222"/><rect x="23" y="138" width="1009" height="623" fill="#000"/><rect x="23" y="138" width="1009" height="1" fill="#e8e8e8"/><rect x="24" y="139" width="1007" height="1" fill="#8c8c8c"/><rect x="23" y="760" width="1009" height="1" fill="#ffffff"/><rect x="24" y="759" width="1007" height="1" fill="#a8a8a8"/><rect x="23" y="138" width="1" height="623" fill="#e8e8e8"/><rect x="24" y="139" width="1" height="621" fill="#8c8c8c"/><rect x="1031" y="138" width="1" height="623" fill="#ffffff"/><rect x="1030" y="139" width="1" height="621" fill="#a8a8a8"/><rect x="44" y="140" width="1" height="4" fill="#cccccc"/><rect x="44" y="755" width="1" height="4" fill="#cccccc"/><rect x="44" y="445" width="1" height="9" fill="#cccccc"/><rect x="64" y="140" width="1" height="4" fill="#cccccc"/><rect x="64" y="755" width="1" height="4" fill="#cccccc"/><rect x="64" y="445" width="1" height="9" fill="#cccccc"/><rect x="84" y="140" width="1" height="4" fill="#cccccc"/><rect x="84" y="755" width="1" height="4" fill="#cccccc"/><rect x="84" y="445" width="1" height="9" fill="#cccccc"/><rect x="104" y="140" width="1" height="4" fill="#cccccc"/><rect x="104" y="755" width="1" height="4" fill="#cccccc"/><rect x="104" y="445" width="1" height="9" fill="#cccccc"/><rect x="124" y="140" width="1" height="7" fill="#cccccc"/><rect x="124" y="752" width="1" height="7" fill="#cccccc"/><rect x="124" y="445" width="1" height="9" fill="#cccccc"/><rect x="144" y="140" width="1" height="4" fill="#cccccc"/><rect x="144" y="755" width="1" height="4" fill="#cccccc"/><rect x="144" y="445" width="1" height="9" fill="#cccccc"/><rect x="164" y="140" width="1" height="4" fill="#cccccc"/><rect x="164" y="755" width="1" height="4" fill="#cccccc"/><rect x="164" y="445" width="1" height="9" fill="#cccccc"/><rect x="184" y="140" width="1" height="4" fill="#cccccc"/><rect x="184" y="755" width="1" height="4" fill="#cccccc"/><rect x="184" y="445" width="1" height="9" fill="#cccccc"/><rect x="205" y="140" width="1" height="4" fill="#cccccc"/><rect x="205" y="755" width="1" height="4" fill="#cccccc"/><rect x="205" y="445" width="1" height="9" fill="#cccccc"/><rect x="225" y="140" width="1" height="7" fill="#cccccc"/><rect x="225" y="752" width="1" height="7" fill="#cccccc"/><rect x="225" y="445" width="1" height="9" fill="#cccccc"/><rect x="245" y="140" width="1" height="4" fill="#cccccc"/><rect x="245" y="755" width="1" height="4" fill="#cccccc"/><rect x="245" y="445" width="1" height="9" fill="#cccccc"/><rect x="265" y="140" width="1" height="4" fill="#cccccc"/><rect x="265" y="755" width="1" height="4" fill="#cccccc"/><rect x="265" y="445" width="1" height="9" fill="#cccccc"/><rect x="285" y="140" width="1" height="4" fill="#cccccc"/><rect x="285" y="755" width="1" height="4" fill="#cccccc"/><rect x="285" y="445" width="1" height="9" fill="#cccccc"/><rect x="305" y="140" width="1" height="4" fill="#cccccc"/><rect x="305" y="755" width="1" height="4" fill="#cccccc"/><rect x="305" y="445" width="1" height="9" fill="#cccccc"/><rect x="325" y="140" width="1" height="7" fill="#cccccc"/><rect x="325" y="752" width="1" height="7" fill="#cccccc"/><rect x="325" y="445" width="1" height="9" fill="#cccccc"/><rect x="345" y="140" width="1" height="4" fill="#cccccc"/><rect x="345" y="755" width="1" height="4" fill="#cccccc"/><rect x="345" y="445" width="1" height="9" fill="#cccccc"/><rect x="366" y="140" width="1" height="4" fill="#cccccc"/><rect x="366" y="755" width="1" height="4" fill="#cccccc"/><rect x="366" y="445" width="1" height="9" fill="#cccccc"/><rect x="386" y="140" width="1" height="4" fill="#cccccc"/><rect x="386" y="755" width="1" height="4" fill="#cccccc"/><rect x="386" y="445" width="1" height="9" fill="#cccccc"/><rect x="406" y="140" width="1" height="4" fill="#cccccc"/><rect x="406" y="755" width="1" height="4" fill="#cccccc"/><rect x="406" y="445" width="1" height="9" fill="#cccccc"/><rect x="426" y="140" width="1" height="7" fill="#cccccc"/><rect x="426" y="752" width="1" height="7" fill="#cccccc"/><rect x="426" y="445" width="1" height="9" fill="#cccccc"/><rect x="446" y="140" width="1" height="4" fill="#cccccc"/><rect x="446" y="755" width="1" height="4" fill="#cccccc"/><rect x="446" y="445" width="1" height="9" fill="#cccccc"/><rect x="466" y="140" width="1" height="4" fill="#cccccc"/><rect x="466" y="755" width="1" height="4" fill="#cccccc"/><rect x="466" y="445" width="1" height="9" fill="#cccccc"/><rect x="486" y="140" width="1" height="4" fill="#cccccc"/><rect x="486" y="755" width="1" height="4" fill="#cccccc"/><rect x="486" y="445" width="1" height="9" fill="#cccccc"/><rect x="506" y="140" width="1" height="4" fill="#cccccc"/><rect x="506" y="755" width="1" height="4" fill="#cccccc"/><rect x="506" y="445" width="1" height="9" fill="#cccccc"/><rect x="527" y="140" width="1" height="7" fill="#cccccc"/><rect x="527" y="752" width="1" height="7" fill="#cccccc"/><rect x="527" y="445" width="1" height="9" fill="#cccccc"/><rect x="547" y="140" width="1" height="4" fill="#cccccc"/><rect x="547" y="755" width="1" height="4" fill="#cccccc"/><rect x="547" y="445" width="1" height="9" fill="#cccccc"/><rect x="567" y="140" width="1" height="4" fill="#cccccc"/><rect x="567" y="755" width="1" height="4" fill="#cccccc"/><rect x="567" y="445" width="1" height="9" fill="#cccccc"/><rect x="587" y="140" width="1" height="4" fill="#cccccc"/><rect x="587" y="755" width="1" height="4" fill="#cccccc"/><rect x="587" y="445" width="1" height="9" fill="#cccccc"/><rect x="607" y="140" width="1" height="4" fill="#cccccc"/><rect x="607" y="755" width="1" height="4" fill="#cccccc"/><rect x="607" y="445" width="1" height="9" fill="#cccccc"/><rect x="627" y="140" width="1" height="7" fill="#cccccc"/><rect x="627" y="752" width="1" height="7" fill="#cccccc"/><rect x="627" y="445" width="1" height="9" fill="#cccccc"/><rect x="647" y="140" width="1" height="4" fill="#cccccc"/><rect x="647" y="755" width="1" height="4" fill="#cccccc"/><rect x="647" y="445" width="1" height="9" fill="#cccccc"/><rect x="667" y="140" width="1" height="4" fill="#cccccc"/><rect x="667" y="755" width="1" height="4" fill="#cccccc"/><rect x="667" y="445" width="1" height="9" fill="#cccccc"/><rect x="687" y="140" width="1" height="4" fill="#cccccc"/><rect x="687" y="755" width="1" height="4" fill="#cccccc"/><rect x="687" y="445" width="1" height="9" fill="#cccccc"/><rect x="708" y="140" width="1" height="4" fill="#cccccc"/><rect x="708" y="755" width="1" height="4" fill="#cccccc"/><rect x="708" y="445" width="1" height="9" fill="#cccccc"/><rect x="728" y="140" width="1" height="7" fill="#cccccc"/><rect x="728" y="752" width="1" height="7" fill="#cccccc"/><rect x="728" y="445" width="1" height="9" fill="#cccccc"/><rect x="748" y="140" width="1" height="4" fill="#cccccc"/><rect x="748" y="755" width="1" height="4" fill="#cccccc"/><rect x="748" y="445" width="1" height="9" fill="#cccccc"/><rect x="768" y="140" width="1" height="4" fill="#cccccc"/><rect x="768" y="755" width="1" height="4" fill="#cccccc"/><rect x="768" y="445" width="1" height="9" fill="#cccccc"/><rect x="788" y="140" width="1" height="4" fill="#cccccc"/><rect x="788" y="755" width="1" height="4" fill="#cccccc"/><rect x="788" y="445" width="1" height="9" fill="#cccccc"/><rect x="808" y="140" width="1" height="4" fill="#cccccc"/><rect x="808" y="755" width="1" height="4" fill="#cccccc"/><rect x="808" y="445" width="1" height="9" fill="#cccccc"/><rect x="828" y="140" width="1" height="7" fill="#cccccc"/><rect x="828" y="752" width="1" height="7" fill="#cccccc"/><rect x="828" y="445" width="1" height="9" fill="#cccccc"/><rect x="848" y="140" width="1" height="4" fill="#cccccc"/><rect x="848" y="755" width="1" height="4" fill="#cccccc"/><rect x="848" y="445" width="1" height="9" fill="#cccccc"/><rect x="869" y="140" width="1" height="4" fill="#cccccc"/><rect x="869" y="755" width="1" height="4" fill="#cccccc"/><rect x="869" y="445" width="1" height="9" fill="#cccccc"/><rect x="889" y="140" width="1" height="4" fill="#cccccc"/><rect x="889" y="755" width="1" height="4" fill="#cccccc"/><rect x="889" y="445" width="1" height="9" fill="#cccccc"/><rect x="909" y="140" width="1" height="4" fill="#cccccc"/><rect x="909" y="755" width="1" height="4" fill="#cccccc"/><rect x="909" y="445" width="1" height="9" fill="#cccccc"/><rect x="929" y="140" width="1" height="7" fill="#cccccc"/><rect x="929" y="752" width="1" height="7" fill="#cccccc"/><rect x="929" y="445" width="1" height="9" fill="#cccccc"/><rect x="949" y="140" width="1" height="4" fill="#cccccc"/><rect x="949" y="755" width="1" height="4" fill="#cccccc"/><rect x="949" y="445" width="1" height="9" fill="#cccccc"/><rect x="969" y="140" width="1" height="4" fill="#cccccc"/><rect x="969" y="755" width="1" height="4" fill="#cccccc"/><rect x="969" y="445" width="1" height="9" fill="#cccccc"/><rect x="989" y="140" width="1" height="4" fill="#cccccc"/><rect x="989" y="755" width="1" height="4" fill="#cccccc"/><rect x="989" y="445" width="1" height="9" fill="#cccccc"/><rect x="1009" y="140" width="1" height="4" fill="#cccccc"/><rect x="1009" y="755" width="1" height="4" fill="#cccccc"/><rect x="1009" y="445" width="1" height="9" fill="#cccccc"/><rect x="25" y="154" width="4" height="1" fill="#cccccc"/><rect x="1026" y="154" width="4" height="1" fill="#cccccc"/><rect x="523" y="154" width="9" height="1" fill="#cccccc"/><rect x="25" y="170" width="4" height="1" fill="#cccccc"/><rect x="1026" y="170" width="4" height="1" fill="#cccccc"/><rect x="523" y="170" width="9" height="1" fill="#cccccc"/><rect x="25" y="185" width="4" height="1" fill="#cccccc"/><rect x="1026" y="185" width="4" height="1" fill="#cccccc"/><rect x="523" y="185" width="9" height="1" fill="#cccccc"/><rect x="25" y="201" width="4" height="1" fill="#cccccc"/><rect x="1026" y="201" width="4" height="1" fill="#cccccc"/><rect x="523" y="201" width="9" height="1" fill="#cccccc"/><rect x="25" y="216" width="7" height="1" fill="#cccccc"/><rect x="1023" y="216" width="7" height="1" fill="#cccccc"/><rect x="523" y="216" width="9" height="1" fill="#cccccc"/><rect x="25" y="232" width="4" height="1" fill="#cccccc"/><rect x="1026" y="232" width="4" height="1" fill="#cccccc"/><rect x="523" y="232" width="9" height="1" fill="#cccccc"/><rect x="25" y="247" width="4" height="1" fill="#cccccc"/><rect x="1026" y="247" width="4" height="1" fill="#cccccc"/><rect x="523" y="247" width="9" height="1" fill="#cccccc"/><rect x="25" y="263" width="4" height="1" fill="#cccccc"/><rect x="1026" y="263" width="4" height="1" fill="#cccccc"/><rect x="523" y="263" width="9" height="1" fill="#cccccc"/><rect x="25" y="278" width="4" height="1" fill="#cccccc"/><rect x="1026" y="278" width="4" height="1" fill="#cccccc"/><rect x="523" y="278" width="9" height="1" fill="#cccccc"/><rect x="25" y="294" width="7" height="1" fill="#cccccc"/><rect x="1023" y="294" width="7" height="1" fill="#cccccc"/><rect x="523" y="294" width="9" height="1" fill="#cccccc"/><rect x="25" y="309" width="4" height="1" fill="#cccccc"/><rect x="1026" y="309" width="4" height="1" fill="#cccccc"/><rect x="523" y="309" width="9" height="1" fill="#cccccc"/><rect x="25" y="325" width="4" height="1" fill="#cccccc"/><rect x="1026" y="325" width="4" height="1" fill="#cccccc"/><rect x="523" y="325" width="9" height="1" fill="#cccccc"/><rect x="25" y="340" width="4" height="1" fill="#cccccc"/><rect x="1026" y="340" width="4" height="1" fill="#cccccc"/><rect x="523" y="340" width="9" height="1" fill="#cccccc"/><rect x="25" y="356" width="4" height="1" fill="#cccccc"/><rect x="1026" y="356" width="4" height="1" fill="#cccccc"/><rect x="523" y="356" width="9" height="1" fill="#cccccc"/><rect x="25" y="371" width="7" height="1" fill="#cccccc"/><rect x="1023" y="371" width="7" height="1" fill="#cccccc"/><rect x="523" y="371" width="9" height="1" fill="#cccccc"/><rect x="25" y="387" width="4" height="1" fill="#cccccc"/><rect x="1026" y="387" width="4" height="1" fill="#cccccc"/><rect x="523" y="387" width="9" height="1" fill="#cccccc"/><rect x="25" y="402" width="4" height="1" fill="#cccccc"/><rect x="1026" y="402" width="4" height="1" fill="#cccccc"/><rect x="523" y="402" width="9" height="1" fill="#cccccc"/><rect x="25" y="418" width="4" height="1" fill="#cccccc"/><rect x="1026" y="418" width="4" height="1" fill="#cccccc"/><rect x="523" y="418" width="9" height="1" fill="#cccccc"/><rect x="25" y="433" width="4" height="1" fill="#cccccc"/><rect x="1026" y="433" width="4" height="1" fill="#cccccc"/><rect x="523" y="433" width="9" height="1" fill="#cccccc"/><rect x="25" y="449" width="7" height="1" fill="#cccccc"/><rect x="1023" y="449" width="7" height="1" fill="#cccccc"/><rect x="523" y="449" width="9" height="1" fill="#cccccc"/><rect x="25" y="464" width="4" height="1" fill="#cccccc"/><rect x="1026" y="464" width="4" height="1" fill="#cccccc"/><rect x="523" y="464" width="9" height="1" fill="#cccccc"/><rect x="25" y="480" width="4" height="1" fill="#cccccc"/><rect x="1026" y="480" width="4" height="1" fill="#cccccc"/><rect x="523" y="480" width="9" height="1" fill="#cccccc"/><rect x="25" y="495" width="4" height="1" fill="#cccccc"/><rect x="1026" y="495" width="4" height="1" fill="#cccccc"/><rect x="523" y="495" width="9" height="1" fill="#cccccc"/><rect x="25" y="511" width="4" height="1" fill="#cccccc"/><rect x="1026" y="511" width="4" height="1" fill="#cccccc"/><rect x="523" y="511" width="9" height="1" fill="#cccccc"/><rect x="25" y="526" width="7" height="1" fill="#cccccc"/><rect x="1023" y="526" width="7" height="1" fill="#cccccc"/><rect x="523" y="526" width="9" height="1" fill="#cccccc"/><rect x="25" y="542" width="4" height="1" fill="#cccccc"/><rect x="1026" y="542" width="4" height="1" fill="#cccccc"/><rect x="523" y="542" width="9" height="1" fill="#cccccc"/><rect x="25" y="557" width="4" height="1" fill="#cccccc"/><rect x="1026" y="557" width="4" height="1" fill="#cccccc"/><rect x="523" y="557" width="9" height="1" fill="#cccccc"/><rect x="25" y="573" width="4" height="1" fill="#cccccc"/><rect x="1026" y="573" width="4" height="1" fill="#cccccc"/><rect x="523" y="573" width="9" height="1" fill="#cccccc"/><rect x="25" y="588" width="4" height="1" fill="#cccccc"/><rect x="1026" y="588" width="4" height="1" fill="#cccccc"/><rect x="523" y="588" width="9" height="1" fill="#cccccc"/><rect x="25" y="604" width="7" height="1" fill="#cccccc"/><rect x="1023" y="604" width="7" height="1" fill="#cccccc"/><rect x="523" y="604" width="9" height="1" fill="#cccccc"/><rect x="25" y="619" width="4" height="1" fill="#cccccc"/><rect x="1026" y="619" width="4" height="1" fill="#cccccc"/><rect x="523" y="619" width="9" height="1" fill="#cccccc"/><rect x="25" y="635" width="4" height="1" fill="#cccccc"/><rect x="1026" y="635" width="4" height="1" fill="#cccccc"/><rect x="523" y="635" width="9" height="1" fill="#cccccc"/><rect x="25" y="650" width="4" height="1" fill="#cccccc"/><rect x="1026" y="650" width="4" height="1" fill="#cccccc"/><rect x="523" y="650" width="9" height="1" fill="#cccccc"/><rect x="25" y="666" width="4" height="1" fill="#cccccc"/><rect x="1026" y="666" width="4" height="1" fill="#cccccc"/><rect x="523" y="666" width="9" height="1" fill="#cccccc"/><rect x="25" y="681" width="7" height="1" fill="#cccccc"/><rect x="1023" y="681" width="7" height="1" fill="#cccccc"/><rect x="523" y="681" width="9" height="1" fill="#cccccc"/><rect x="25" y="697" width="4" height="1" fill="#cccccc"/><rect x="1026" y="697" width="4" height="1" fill="#cccccc"/><rect x="523" y="697" width="9" height="1" fill="#cccccc"/><rect x="25" y="712" width="4" height="1" fill="#cccccc"/><rect x="1026" y="712" width="4" height="1" fill="#cccccc"/><rect x="523" y="712" width="9" height="1" fill="#cccccc"/><rect x="25" y="728" width="4" height="1" fill="#cccccc"/><rect x="1026" y="728" width="4" height="1" fill="#cccccc"/><rect x="523" y="728" width="9" height="1" fill="#cccccc"/><rect x="25" y="743" width="4" height="1" fill="#cccccc"/><rect x="1026" y="743" width="4" height="1" fill="#cccccc"/><rect x="523" y="743" width="9" height="1" fill="#cccccc"/><rect x="25" y="449" width="1005" height="1" fill="#cccccc"/><rect x="527" y="140" width="1" height="619" fill="#cccccc"/><rect x="225" y="154" width="1" height="1" fill="#d8d8d8"/><rect x="225" y="170" width="1" height="1" fill="#d8d8d8"/><rect x="225" y="185" width="1" height="1" fill="#d8d8d8"/><rect x="225" y="201" width="1" height="1" fill="#d8d8d8"/><rect x="225" y="216" width="1" height="1" fill="#d8d8d8"/><rect x="225" y="232" width="1" height="1" fill="#d8d8d8"/><rect x="225" y="247" width="1" height="1" fill="#d8d8d8"/><rect x="225" y="263" width="1" height="1" fill="#d8d8d8"/><rect x="225" y="278" width="1" height="1" fill="#d8d8d8"/><rect x="225" y="294" width="1" height="1" fill="#d8d8d8"/><rect x="225" y="309" width="1" height="1" fill="#d8d8d8"/><rect x="225" y="325" width="1" height="1" fill="#d8d8d8"/><rect x="225" y="340" width="1" height="1" fill="#d8d8d8"/><rect x="225" y="356" width="1" height="1" fill="#d8d8d8"/><rect x="225" y="371" width="1" height="1" fill="#d8d8d8"/><rect x="225" y="387" width="1" height="1" fill="#d8d8d8"/><rect x="225" y="402" width="1" height="1" fill="#d8d8d8"/><rect x="225" y="418" width="1" height="1" fill="#d8d8d8"/><rect x="225" y="433" width="1" height="1" fill="#d8d8d8"/><rect x="225" y="449" width="1" height="1" fill="#d8d8d8"/><rect x="225" y="464" width="1" height="1" fill="#d8d8d8"/><rect x="225" y="480" width="1" height="1" fill="#d8d8d8"/><rect x="225" y="495" width="1" height="1" fill="#d8d8d8"/><rect x="225" y="511" width="1" height="1" fill="#d8d8d8"/><rect x="225" y="526" width="1" height="1" fill="#d8d8d8"/><rect x="225" y="542" width="1" height="1" fill="#d8d8d8"/><rect x="225" y="557" width="1" height="1" fill="#d8d8d8"/><rect x="225" y="573" width="1" height="1" fill="#d8d8d8"/><rect x="225" y="588" width="1" height="1" fill="#d8d8d8"/><rect x="225" y="604" width="1" height="1" fill="#d8d8d8"/><rect x="225" y="619" width="1" height="1" fill="#d8d8d8"/><rect x="225" y="635" width="1" height="1" fill="#d8d8d8"/><rect x="225" y="650" width="1" height="1" fill="#d8d8d8"/><rect x="225" y="666" width="1" height="1" fill="#d8d8d8"/><rect x="225" y="681" width="1" height="1" fill="#d8d8d8"/><rect x="225" y="697" width="1" height="1" fill="#d8d8d8"/><rect x="225" y="712" width="1" height="1" fill="#d8d8d8"/><rect x="225" y="728" width="1" height="1" fill="#d8d8d8"/><rect x="225" y="743" width="1" height="1" fill="#d8d8d8"/><rect x="929" y="154" width="1" height="1" fill="#d8d8d8"/><rect x="929" y="170" width="1" height="1" fill="#d8d8d8"/><rect x="929" y="185" width="1" height="1" fill="#d8d8d8"/><rect x="929" y="201" width="1" height="1" fill="#d8d8d8"/><rect x="929" y="216" width="1" height="1" fill="#d8d8d8"/><rect x="929" y="232" width="1" height="1" fill="#d8d8d8"/><rect x="929" y="247" width="1" height="1" fill="#d8d8d8"/><rect x="929" y="263" width="1" height="1" fill="#d8d8d8"/><rect x="929" y="278" width="1" height="1" fill="#d8d8d8"/><rect x="929" y="294" width="1" height="1" fill="#d8d8d8"/><rect x="929" y="309" width="1" height="1" fill="#d8d8d8"/><rect x="929" y="325" width="1" height="1" fill="#d8d8d8"/><rect x="929" y="340" width="1" height="1" fill="#d8d8d8"/><rect x="929" y="356" width="1" height="1" fill="#d8d8d8"/><rect x="929" y="371" width="1" height="1" fill="#d8d8d8"/><rect x="929" y="387" width="1" height="1" fill="#d8d8d8"/><rect x="929" y="402" width="1" height="1" fill="#d8d8d8"/><rect x="929" y="418" width="1" height="1" fill="#d8d8d8"/><rect x="929" y="433" width="1" height="1" fill="#d8d8d8"/><rect x="929" y="449" width="1" height="1" fill="#d8d8d8"/><rect x="929" y="464" width="1" height="1" fill="#d8d8d8"/><rect x="929" y="480" width="1" height="1" fill="#d8d8d8"/><rect x="929" y="495" width="1" height="1" fill="#d8d8d8"/><rect x="929" y="511" width="1" height="1" fill="#d8d8d8"/><rect x="929" y="526" width="1" height="1" fill="#d8d8d8"/><rect x="929" y="542" width="1" height="1" fill="#d8d8d8"/><rect x="929" y="557" width="1" height="1" fill="#d8d8d8"/><rect x="929" y="573" width="1" height="1" fill="#d8d8d8"/><rect x="929" y="588" width="1" height="1" fill="#d8d8d8"/><rect x="929" y="604" width="1" height="1" fill="#d8d8d8"/><rect x="929" y="619" width="1" height="1" fill="#d8d8d8"/><rect x="929" y="635" width="1" height="1" fill="#d8d8d8"/><rect x="929" y="650" width="1" height="1" fill="#d8d8d8"/><rect x="929" y="666" width="1" height="1" fill="#d8d8d8"/><rect x="929" y="681" width="1" height="1" fill="#d8d8d8"/><rect x="929" y="697" width="1" height="1" fill="#d8d8d8"/><rect x="929" y="712" width="1" height="1" fill="#d8d8d8"/><rect x="929" y="728" width="1" height="1" fill="#d8d8d8"/><rect x="929" y="743" width="1" height="1" fill="#d8d8d8"/><rect x="325" y="154" width="1" height="1" fill="#d8d8d8"/><rect x="325" y="170" width="1" height="1" fill="#d8d8d8"/><rect x="325" y="185" width="1" height="1" fill="#d8d8d8"/><rect x="325" y="201" width="1" height="1" fill="#d8d8d8"/><rect x="325" y="216" width="1" height="1" fill="#d8d8d8"/><rect x="325" y="232" width="1" height="1" fill="#d8d8d8"/><rect x="325" y="247" width="1" height="1" fill="#d8d8d8"/><rect x="325" y="263" width="1" height="1" fill="#d8d8d8"/><rect x="325" y="278" width="1" height="1" fill="#d8d8d8"/><rect x="325" y="294" width="1" height="1" fill="#d8d8d8"/><rect x="325" y="309" width="1" height="1" fill="#d8d8d8"/><rect x="325" y="325" width="1" height="1" fill="#d8d8d8"/><rect x="325" y="340" width="1" height="1" fill="#d8d8d8"/><rect x="325" y="356" width="1" height="1" fill="#d8d8d8"/><rect x="325" y="371" width="1" height="1" fill="#d8d8d8"/><rect x="325" y="387" width="1" height="1" fill="#d8d8d8"/><rect x="325" y="402" width="1" height="1" fill="#d8d8d8"/><rect x="325" y="418" width="1" height="1" fill="#d8d8d8"/><rect x="325" y="433" width="1" height="1" fill="#d8d8d8"/><rect x="325" y="449" width="1" height="1" fill="#d8d8d8"/><rect x="325" y="464" width="1" height="1" fill="#d8d8d8"/><rect x="325" y="480" width="1" height="1" fill="#d8d8d8"/><rect x="325" y="495" width="1" height="1" fill="#d8d8d8"/><rect x="325" y="511" width="1" height="1" fill="#d8d8d8"/><rect x="325" y="526" width="1" height="1" fill="#d8d8d8"/><rect x="325" y="542" width="1" height="1" fill="#d8d8d8"/><rect x="325" y="557" width="1" height="1" fill="#d8d8d8"/><rect x="325" y="573" width="1" height="1" fill="#d8d8d8"/><rect x="325" y="588" width="1" height="1" fill="#d8d8d8"/><rect x="325" y="604" width="1" height="1" fill="#d8d8d8"/><rect x="325" y="619" width="1" height="1" fill="#d8d8d8"/><rect x="325" y="635" width="1" height="1" fill="#d8d8d8"/><rect x="325" y="650" width="1" height="1" fill="#d8d8d8"/><rect x="325" y="666" width="1" height="1" fill="#d8d8d8"/><rect x="325" y="681" width="1" height="1" fill="#d8d8d8"/><rect x="325" y="697" width="1" height="1" fill="#d8d8d8"/><rect x="325" y="712" width="1" height="1" fill="#d8d8d8"/><rect x="325" y="728" width="1" height="1" fill="#d8d8d8"/><rect x="325" y="743" width="1" height="1" fill="#d8d8d8"/><rect x="828" y="154" width="1" height="1" fill="#d8d8d8"/><rect x="828" y="170" width="1" height="1" fill="#d8d8d8"/><rect x="828" y="185" width="1" height="1" fill="#d8d8d8"/><rect x="828" y="201" width="1" height="1" fill="#d8d8d8"/><rect x="828" y="216" width="1" height="1" fill="#d8d8d8"/><rect x="828" y="232" width="1" height="1" fill="#d8d8d8"/><rect x="828" y="247" width="1" height="1" fill="#d8d8d8"/><rect x="828" y="263" width="1" height="1" fill="#d8d8d8"/><rect x="828" y="278" width="1" height="1" fill="#d8d8d8"/><rect x="828" y="294" width="1" height="1" fill="#d8d8d8"/><rect x="828" y="309" width="1" height="1" fill="#d8d8d8"/><rect x="828" y="325" width="1" height="1" fill="#d8d8d8"/><rect x="828" y="340" width="1" height="1" fill="#d8d8d8"/><rect x="828" y="356" width="1" height="1" fill="#d8d8d8"/><rect x="828" y="371" width="1" height="1" fill="#d8d8d8"/><rect x="828" y="387" width="1" height="1" fill="#d8d8d8"/><rect x="828" y="402" width="1" height="1" fill="#d8d8d8"/><rect x="828" y="418" width="1" height="1" fill="#d8d8d8"/><rect x="828" y="433" width="1" height="1" fill="#d8d8d8"/><rect x="828" y="449" width="1" height="1" fill="#d8d8d8"/><rect x="828" y="464" width="1" height="1" fill="#d8d8d8"/><rect x="828" y="480" width="1" height="1" fill="#d8d8d8"/><rect x="828" y="495" width="1" height="1" fill="#d8d8d8"/><rect x="828" y="511" width="1" height="1" fill="#d8d8d8"/><rect x="828" y="526" width="1" height="1" fill="#d8d8d8"/><rect x="828" y="542" width="1" height="1" fill="#d8d8d8"/><rect x="828" y="557" width="1" height="1" fill="#d8d8d8"/><rect x="828" y="573" width="1" height="1" fill="#d8d8d8"/><rect x="828" y="588" width="1" height="1" fill="#d8d8d8"/><rect x="828" y="604" width="1" height="1" fill="#d8d8d8"/><rect x="828" y="619" width="1" height="1" fill="#d8d8d8"/><rect x="828" y="635" width="1" height="1" fill="#d8d8d8"/><rect x="828" y="650" width="1" height="1" fill="#d8d8d8"/><rect x="828" y="666" width="1" height="1" fill="#d8d8d8"/><rect x="828" y="681" width="1" height="1" fill="#d8d8d8"/><rect x="828" y="697" width="1" height="1" fill="#d8d8d8"/><rect x="828" y="712" width="1" height="1" fill="#d8d8d8"/><rect x="828" y="728" width="1" height="1" fill="#d8d8d8"/><rect x="828" y="743" width="1" height="1" fill="#d8d8d8"/><rect x="426" y="154" width="1" height="1" fill="#d8d8d8"/><rect x="426" y="170" width="1" height="1" fill="#d8d8d8"/><rect x="426" y="185" width="1" height="1" fill="#d8d8d8"/><rect x="426" y="201" width="1" height="1" fill="#d8d8d8"/><rect x="426" y="216" width="1" height="1" fill="#d8d8d8"/><rect x="426" y="232" width="1" height="1" fill="#d8d8d8"/><rect x="426" y="247" width="1" height="1" fill="#d8d8d8"/><rect x="426" y="263" width="1" height="1" fill="#d8d8d8"/><rect x="426" y="278" width="1" height="1" fill="#d8d8d8"/><rect x="426" y="294" width="1" height="1" fill="#d8d8d8"/><rect x="426" y="309" width="1" height="1" fill="#d8d8d8"/><rect x="426" y="325" width="1" height="1" fill="#d8d8d8"/><rect x="426" y="340" width="1" height="1" fill="#d8d8d8"/><rect x="426" y="356" width="1" height="1" fill="#d8d8d8"/><rect x="426" y="371" width="1" height="1" fill="#d8d8d8"/><rect x="426" y="387" width="1" height="1" fill="#d8d8d8"/><rect x="426" y="402" width="1" height="1" fill="#d8d8d8"/><rect x="426" y="418" width="1" height="1" fill="#d8d8d8"/><rect x="426" y="433" width="1" height="1" fill="#d8d8d8"/><rect x="426" y="449" width="1" height="1" fill="#d8d8d8"/><rect x="426" y="464" width="1" height="1" fill="#d8d8d8"/><rect x="426" y="480" width="1" height="1" fill="#d8d8d8"/><rect x="426" y="495" width="1" height="1" fill="#d8d8d8"/><rect x="426" y="511" width="1" height="1" fill="#d8d8d8"/><rect x="426" y="526" width="1" height="1" fill="#d8d8d8"/><rect x="426" y="542" width="1" height="1" fill="#d8d8d8"/><rect x="426" y="557" width="1" height="1" fill="#d8d8d8"/><rect x="426" y="573" width="1" height="1" fill="#d8d8d8"/><rect x="426" y="588" width="1" height="1" fill="#d8d8d8"/><rect x="426" y="604" width="1" height="1" fill="#d8d8d8"/><rect x="426" y="619" width="1" height="1" fill="#d8d8d8"/><rect x="426" y="635" width="1" height="1" fill="#d8d8d8"/><rect x="426" y="650" width="1" height="1" fill="#d8d8d8"/><rect x="426" y="666" width="1" height="1" fill="#d8d8d8"/><rect x="426" y="681" width="1" height="1" fill="#d8d8d8"/><rect x="426" y="697" width="1" height="1" fill="#d8d8d8"/><rect x="426" y="712" width="1" height="1" fill="#d8d8d8"/><rect x="426" y="728" width="1" height="1" fill="#d8d8d8"/><rect x="426" y="743" width="1" height="1" fill="#d8d8d8"/><rect x="627" y="154" width="1" height="1" fill="#d8d8d8"/><rect x="627" y="170" width="1" height="1" fill="#d8d8d8"/><rect x="627" y="185" width="1" height="1" fill="#d8d8d8"/><rect x="627" y="201" width="1" height="1" fill="#d8d8d8"/><rect x="627" y="216" width="1" height="1" fill="#d8d8d8"/><rect x="627" y="232" width="1" height="1" fill="#d8d8d8"/><rect x="627" y="247" width="1" height="1" fill="#d8d8d8"/><rect x="627" y="263" width="1" height="1" fill="#d8d8d8"/><rect x="627" y="278" width="1" height="1" fill="#d8d8d8"/><rect x="627" y="294" width="1" height="1" fill="#d8d8d8"/><rect x="627" y="309" width="1" height="1" fill="#d8d8d8"/><rect x="627" y="325" width="1" height="1" fill="#d8d8d8"/><rect x="627" y="340" width="1" height="1" fill="#d8d8d8"/><rect x="627" y="356" width="1" height="1" fill="#d8d8d8"/><rect x="627" y="371" width="1" height="1" fill="#d8d8d8"/><rect x="627" y="387" width="1" height="1" fill="#d8d8d8"/><rect x="627" y="402" width="1" height="1" fill="#d8d8d8"/><rect x="627" y="418" width="1" height="1" fill="#d8d8d8"/><rect x="627" y="433" width="1" height="1" fill="#d8d8d8"/><rect x="627" y="449" width="1" height="1" fill="#d8d8d8"/><rect x="627" y="464" width="1" height="1" fill="#d8d8d8"/><rect x="627" y="480" width="1" height="1" fill="#d8d8d8"/><rect x="627" y="495" width="1" height="1" fill="#d8d8d8"/><rect x="627" y="511" width="1" height="1" fill="#d8d8d8"/><rect x="627" y="526" width="1" height="1" fill="#d8d8d8"/><rect x="627" y="542" width="1" height="1" fill="#d8d8d8"/><rect x="627" y="557" width="1" height="1" fill="#d8d8d8"/><rect x="627" y="573" width="1" height="1" fill="#d8d8d8"/><rect x="627" y="588" width="1" height="1" fill="#d8d8d8"/><rect x="627" y="604" width="1" height="1" fill="#d8d8d8"/><rect x="627" y="619" width="1" height="1" fill="#d8d8d8"/><rect x="627" y="635" width="1" height="1" fill="#d8d8d8"/><rect x="627" y="650" width="1" height="1" fill="#d8d8d8"/><rect x="627" y="666" width="1" height="1" fill="#d8d8d8"/><rect x="627" y="681" width="1" height="1" fill="#d8d8d8"/><rect x="627" y="697" width="1" height="1" fill="#d8d8d8"/><rect x="627" y="712" width="1" height="1" fill="#d8d8d8"/><rect x="627" y="728" width="1" height="1" fill="#d8d8d8"/><rect x="627" y="743" width="1" height="1" fill="#d8d8d8"/><rect x="728" y="154" width="1" height="1" fill="#d8d8d8"/><rect x="728" y="170" width="1" height="1" fill="#d8d8d8"/><rect x="728" y="185" width="1" height="1" fill="#d8d8d8"/><rect x="728" y="201" width="1" height="1" fill="#d8d8d8"/><rect x="728" y="216" width="1" height="1" fill="#d8d8d8"/><rect x="728" y="232" width="1" height="1" fill="#d8d8d8"/><rect x="728" y="247" width="1" height="1" fill="#d8d8d8"/><rect x="728" y="263" width="1" height="1" fill="#d8d8d8"/><rect x="728" y="278" width="1" height="1" fill="#d8d8d8"/><rect x="728" y="294" width="1" height="1" fill="#d8d8d8"/><rect x="728" y="309" width="1" height="1" fill="#d8d8d8"/><rect x="728" y="325" width="1" height="1" fill="#d8d8d8"/><rect x="728" y="340" width="1" height="1" fill="#d8d8d8"/><rect x="728" y="356" width="1" height="1" fill="#d8d8d8"/><rect x="728" y="371" width="1" height="1" fill="#d8d8d8"/><rect x="728" y="387" width="1" height="1" fill="#d8d8d8"/><rect x="728" y="402" width="1" height="1" fill="#d8d8d8"/><rect x="728" y="418" width="1" height="1" fill="#d8d8d8"/><rect x="728" y="433" width="1" height="1" fill="#d8d8d8"/><rect x="728" y="449" width="1" height="1" fill="#d8d8d8"/><rect x="728" y="464" width="1" height="1" fill="#d8d8d8"/><rect x="728" y="480" width="1" height="1" fill="#d8d8d8"/><rect x="728" y="495" width="1" height="1" fill="#d8d8d8"/><rect x="728" y="511" width="1" height="1" fill="#d8d8d8"/><rect x="728" y="526" width="1" height="1" fill="#d8d8d8"/><rect x="728" y="542" width="1" height="1" fill="#d8d8d8"/><rect x="728" y="557" width="1" height="1" fill="#d8d8d8"/><rect x="728" y="573" width="1" height="1" fill="#d8d8d8"/><rect x="728" y="588" width="1" height="1" fill="#d8d8d8"/><rect x="728" y="604" width="1" height="1" fill="#d8d8d8"/><rect x="728" y="619" width="1" height="1" fill="#d8d8d8"/><rect x="728" y="635" width="1" height="1" fill="#d8d8d8"/><rect x="728" y="650" width="1" height="1" fill="#d8d8d8"/><rect x="728" y="666" width="1" height="1" fill="#d8d8d8"/><rect x="728" y="681" width="1" height="1" fill="#d8d8d8"/><rect x="728" y="697" width="1" height="1" fill="#d8d8d8"/><rect x="728" y="712" width="1" height="1" fill="#d8d8d8"/><rect x="728" y="728" width="1" height="1" fill="#d8d8d8"/><rect x="728" y="743" width="1" height="1" fill="#d8d8d8"/><rect x="124" y="154" width="1" height="1" fill="#d8d8d8"/><rect x="124" y="170" width="1" height="1" fill="#d8d8d8"/><rect x="124" y="185" width="1" height="1" fill="#d8d8d8"/><rect x="124" y="201" width="1" height="1" fill="#d8d8d8"/><rect x="124" y="216" width="1" height="1" fill="#d8d8d8"/><rect x="124" y="232" width="1" height="1" fill="#d8d8d8"/><rect x="124" y="247" width="1" height="1" fill="#d8d8d8"/><rect x="124" y="263" width="1" height="1" fill="#d8d8d8"/><rect x="124" y="278" width="1" height="1" fill="#d8d8d8"/><rect x="124" y="294" width="1" height="1" fill="#d8d8d8"/><rect x="124" y="309" width="1" height="1" fill="#d8d8d8"/><rect x="124" y="325" width="1" height="1" fill="#d8d8d8"/><rect x="124" y="340" width="1" height="1" fill="#d8d8d8"/><rect x="124" y="356" width="1" height="1" fill="#d8d8d8"/><rect x="124" y="371" width="1" height="1" fill="#d8d8d8"/><rect x="124" y="387" width="1" height="1" fill="#d8d8d8"/><rect x="124" y="402" width="1" height="1" fill="#d8d8d8"/><rect x="124" y="418" width="1" height="1" fill="#d8d8d8"/><rect x="124" y="433" width="1" height="1" fill="#d8d8d8"/><rect x="124" y="449" width="1" height="1" fill="#d8d8d8"/><rect x="124" y="464" width="1" height="1" fill="#d8d8d8"/><rect x="124" y="480" width="1" height="1" fill="#d8d8d8"/><rect x="124" y="495" width="1" height="1" fill="#d8d8d8"/><rect x="124" y="511" width="1" height="1" fill="#d8d8d8"/><rect x="124" y="526" width="1" height="1" fill="#d8d8d8"/><rect x="124" y="542" width="1" height="1" fill="#d8d8d8"/><rect x="124" y="557" width="1" height="1" fill="#d8d8d8"/><rect x="124" y="573" width="1" height="1" fill="#d8d8d8"/><rect x="124" y="588" width="1" height="1" fill="#d8d8d8"/><rect x="124" y="604" width="1" height="1" fill="#d8d8d8"/><rect x="124" y="619" width="1" height="1" fill="#d8d8d8"/><rect x="124" y="635" width="1" height="1" fill="#d8d8d8"/><rect x="124" y="650" width="1" height="1" fill="#d8d8d8"/><rect x="124" y="666" width="1" height="1" fill="#d8d8d8"/><rect x="124" y="681" width="1" height="1" fill="#d8d8d8"/><rect x="124" y="697" width="1" height="1" fill="#d8d8d8"/><rect x="124" y="712" width="1" height="1" fill="#d8d8d8"/><rect x="124" y="728" width="1" height="1" fill="#d8d8d8"/><rect x="124" y="743" width="1" height="1" fill="#d8d8d8"/><rect x="44" y="294" width="1" height="1" fill="#d8d8d8"/><rect x="64" y="294" width="1" height="1" fill="#d8d8d8"/><rect x="84" y="294" width="1" height="1" fill="#d8d8d8"/><rect x="104" y="294" width="1" height="1" fill="#d8d8d8"/><rect x="124" y="294" width="1" height="1" fill="#d8d8d8"/><rect x="144" y="294" width="1" height="1" fill="#d8d8d8"/><rect x="164" y="294" width="1" height="1" fill="#d8d8d8"/><rect x="184" y="294" width="1" height="1" fill="#d8d8d8"/><rect x="205" y="294" width="1" height="1" fill="#d8d8d8"/><rect x="225" y="294" width="1" height="1" fill="#d8d8d8"/><rect x="245" y="294" width="1" height="1" fill="#d8d8d8"/><rect x="265" y="294" width="1" height="1" fill="#d8d8d8"/><rect x="285" y="294" width="1" height="1" fill="#d8d8d8"/><rect x="305" y="294" width="1" height="1" fill="#d8d8d8"/><rect x="325" y="294" width="1" height="1" fill="#d8d8d8"/><rect x="345" y="294" width="1" height="1" fill="#d8d8d8"/><rect x="366" y="294" width="1" height="1" fill="#d8d8d8"/><rect x="386" y="294" width="1" height="1" fill="#d8d8d8"/><rect x="406" y="294" width="1" height="1" fill="#d8d8d8"/><rect x="426" y="294" width="1" height="1" fill="#d8d8d8"/><rect x="446" y="294" width="1" height="1" fill="#d8d8d8"/><rect x="466" y="294" width="1" height="1" fill="#d8d8d8"/><rect x="486" y="294" width="1" height="1" fill="#d8d8d8"/><rect x="506" y="294" width="1" height="1" fill="#d8d8d8"/><rect x="527" y="294" width="1" height="1" fill="#d8d8d8"/><rect x="547" y="294" width="1" height="1" fill="#d8d8d8"/><rect x="567" y="294" width="1" height="1" fill="#d8d8d8"/><rect x="587" y="294" width="1" height="1" fill="#d8d8d8"/><rect x="607" y="294" width="1" height="1" fill="#d8d8d8"/><rect x="627" y="294" width="1" height="1" fill="#d8d8d8"/><rect x="647" y="294" width="1" height="1" fill="#d8d8d8"/><rect x="667" y="294" width="1" height="1" fill="#d8d8d8"/><rect x="687" y="294" width="1" height="1" fill="#d8d8d8"/><rect x="708" y="294" width="1" height="1" fill="#d8d8d8"/><rect x="728" y="294" width="1" height="1" fill="#d8d8d8"/><rect x="748" y="294" width="1" height="1" fill="#d8d8d8"/><rect x="768" y="294" width="1" height="1" fill="#d8d8d8"/><rect x="788" y="294" width="1" height="1" fill="#d8d8d8"/><rect x="808" y="294" width="1" height="1" fill="#d8d8d8"/><rect x="828" y="294" width="1" height="1" fill="#d8d8d8"/><rect x="848" y="294" width="1" height="1" fill="#d8d8d8"/><rect x="869" y="294" width="1" height="1" fill="#d8d8d8"/><rect x="889" y="294" width="1" height="1" fill="#d8d8d8"/><rect x="909" y="294" width="1" height="1" fill="#d8d8d8"/><rect x="929" y="294" width="1" height="1" fill="#d8d8d8"/><rect x="949" y="294" width="1" height="1" fill="#d8d8d8"/><rect x="969" y="294" width="1" height="1" fill="#d8d8d8"/><rect x="989" y="294" width="1" height="1" fill="#d8d8d8"/><rect x="1009" y="294" width="1" height="1" fill="#d8d8d8"/><rect x="44" y="681" width="1" height="1" fill="#d8d8d8"/><rect x="64" y="681" width="1" height="1" fill="#d8d8d8"/><rect x="84" y="681" width="1" height="1" fill="#d8d8d8"/><rect x="104" y="681" width="1" height="1" fill="#d8d8d8"/><rect x="124" y="681" width="1" height="1" fill="#d8d8d8"/><rect x="144" y="681" width="1" height="1" fill="#d8d8d8"/><rect x="164" y="681" width="1" height="1" fill="#d8d8d8"/><rect x="184" y="681" width="1" height="1" fill="#d8d8d8"/><rect x="205" y="681" width="1" height="1" fill="#d8d8d8"/><rect x="225" y="681" width="1" height="1" fill="#d8d8d8"/><rect x="245" y="681" width="1" height="1" fill="#d8d8d8"/><rect x="265" y="681" width="1" height="1" fill="#d8d8d8"/><rect x="285" y="681" width="1" height="1" fill="#d8d8d8"/><rect x="305" y="681" width="1" height="1" fill="#d8d8d8"/><rect x="325" y="681" width="1" height="1" fill="#d8d8d8"/><rect x="345" y="681" width="1" height="1" fill="#d8d8d8"/><rect x="366" y="681" width="1" height="1" fill="#d8d8d8"/><rect x="386" y="681" width="1" height="1" fill="#d8d8d8"/><rect x="406" y="681" width="1" height="1" fill="#d8d8d8"/><rect x="426" y="681" width="1" height="1" fill="#d8d8d8"/><rect x="446" y="681" width="1" height="1" fill="#d8d8d8"/><rect x="466" y="681" width="1" height="1" fill="#d8d8d8"/><rect x="486" y="681" width="1" height="1" fill="#d8d8d8"/><rect x="506" y="681" width="1" height="1" fill="#d8d8d8"/><rect x="527" y="681" width="1" height="1" fill="#d8d8d8"/><rect x="547" y="681" width="1" height="1" fill="#d8d8d8"/><rect x="567" y="681" width="1" height="1" fill="#d8d8d8"/><rect x="587" y="681" width="1" height="1" fill="#d8d8d8"/><rect x="607" y="681" width="1" height="1" fill="#d8d8d8"/><rect x="627" y="681" width="1" height="1" fill="#d8d8d8"/><rect x="647" y="681" width="1" height="1" fill="#d8d8d8"/><rect x="667" y="681" width="1" height="1" fill="#d8d8d8"/><rect x="687" y="681" width="1" height="1" fill="#d8d8d8"/><rect x="708" y="681" width="1" height="1" fill="#d8d8d8"/><rect x="728" y="681" width="1" height="1" fill="#d8d8d8"/><rect x="748" y="681" width="1" height="1" fill="#d8d8d8"/><rect x="768" y="681" width="1" height="1" fill="#d8d8d8"/><rect x="788" y="681" width="1" height="1" fill="#d8d8d8"/><rect x="808" y="681" width="1" height="1" fill="#d8d8d8"/><rect x="828" y="681" width="1" height="1" fill="#d8d8d8"/><rect x="848" y="681" width="1" height="1" fill="#d8d8d8"/><rect x="869" y="681" width="1" height="1" fill="#d8d8d8"/><rect x="889" y="681" width="1" height="1" fill="#d8d8d8"/><rect x="909" y="681" width="1" height="1" fill="#d8d8d8"/><rect x="929" y="681" width="1" height="1" fill="#d8d8d8"/><rect x="949" y="681" width="1" height="1" fill="#d8d8d8"/><rect x="969" y="681" width="1" height="1" fill="#d8d8d8"/><rect x="989" y="681" width="1" height="1" fill="#d8d8d8"/><rect x="1009" y="681" width="1" height="1" fill="#d8d8d8"/><rect x="44" y="526" width="1" height="1" fill="#d8d8d8"/><rect x="64" y="526" width="1" height="1" fill="#d8d8d8"/><rect x="84" y="526" width="1" height="1" fill="#d8d8d8"/><rect x="104" y="526" width="1" height="1" fill="#d8d8d8"/><rect x="124" y="526" width="1" height="1" fill="#d8d8d8"/><rect x="144" y="526" width="1" height="1" fill="#d8d8d8"/><rect x="164" y="526" width="1" height="1" fill="#d8d8d8"/><rect x="184" y="526" width="1" height="1" fill="#d8d8d8"/><rect x="205" y="526" width="1" height="1" fill="#d8d8d8"/><rect x="225" y="526" width="1" height="1" fill="#d8d8d8"/><rect x="245" y="526" width="1" height="1" fill="#d8d8d8"/><rect x="265" y="526" width="1" height="1" fill="#d8d8d8"/><rect x="285" y="526" width="1" height="1" fill="#d8d8d8"/><rect x="305" y="526" width="1" height="1" fill="#d8d8d8"/><rect x="325" y="526" width="1" height="1" fill="#d8d8d8"/><rect x="345" y="526" width="1" height="1" fill="#d8d8d8"/><rect x="366" y="526" width="1" height="1" fill="#d8d8d8"/><rect x="386" y="526" width="1" height="1" fill="#d8d8d8"/><rect x="406" y="526" width="1" height="1" fill="#d8d8d8"/><rect x="426" y="526" width="1" height="1" fill="#d8d8d8"/><rect x="446" y="526" width="1" height="1" fill="#d8d8d8"/><rect x="466" y="526" width="1" height="1" fill="#d8d8d8"/><rect x="486" y="526" width="1" height="1" fill="#d8d8d8"/><rect x="506" y="526" width="1" height="1" fill="#d8d8d8"/><rect x="527" y="526" width="1" height="1" fill="#d8d8d8"/><rect x="547" y="526" width="1" height="1" fill="#d8d8d8"/><rect x="567" y="526" width="1" height="1" fill="#d8d8d8"/><rect x="587" y="526" width="1" height="1" fill="#d8d8d8"/><rect x="607" y="526" width="1" height="1" fill="#d8d8d8"/><rect x="627" y="526" width="1" height="1" fill="#d8d8d8"/><rect x="647" y="526" width="1" height="1" fill="#d8d8d8"/><rect x="667" y="526" width="1" height="1" fill="#d8d8d8"/><rect x="687" y="526" width="1" height="1" fill="#d8d8d8"/><rect x="708" y="526" width="1" height="1" fill="#d8d8d8"/><rect x="728" y="526" width="1" height="1" fill="#d8d8d8"/><rect x="748" y="526" width="1" height="1" fill="#d8d8d8"/><rect x="768" y="526" width="1" height="1" fill="#d8d8d8"/><rect x="788" y="526" width="1" height="1" fill="#d8d8d8"/><rect x="808" y="526" width="1" height="1" fill="#d8d8d8"/><rect x="828" y="526" width="1" height="1" fill="#d8d8d8"/><rect x="848" y="526" width="1" height="1" fill="#d8d8d8"/><rect x="869" y="526" width="1" height="1" fill="#d8d8d8"/><rect x="889" y="526" width="1" height="1" fill="#d8d8d8"/><rect x="909" y="526" width="1" height="1" fill="#d8d8d8"/><rect x="929" y="526" width="1" height="1" fill="#d8d8d8"/><rect x="949" y="526" width="1" height="1" fill="#d8d8d8"/><rect x="969" y="526" width="1" height="1" fill="#d8d8d8"/><rect x="989" y="526" width="1" height="1" fill="#d8d8d8"/><rect x="1009" y="526" width="1" height="1" fill="#d8d8d8"/><rect x="44" y="371" width="1" height="1" fill="#d8d8d8"/><rect x="64" y="371" width="1" height="1" fill="#d8d8d8"/><rect x="84" y="371" width="1" height="1" fill="#d8d8d8"/><rect x="104" y="371" width="1" height="1" fill="#d8d8d8"/><rect x="124" y="371" width="1" height="1" fill="#d8d8d8"/><rect x="144" y="371" width="1" height="1" fill="#d8d8d8"/><rect x="164" y="371" width="1" height="1" fill="#d8d8d8"/><rect x="184" y="371" width="1" height="1" fill="#d8d8d8"/><rect x="205" y="371" width="1" height="1" fill="#d8d8d8"/><rect x="225" y="371" width="1" height="1" fill="#d8d8d8"/><rect x="245" y="371" width="1" height="1" fill="#d8d8d8"/><rect x="265" y="371" width="1" height="1" fill="#d8d8d8"/><rect x="285" y="371" width="1" height="1" fill="#d8d8d8"/><rect x="305" y="371" width="1" height="1" fill="#d8d8d8"/><rect x="325" y="371" width="1" height="1" fill="#d8d8d8"/><rect x="345" y="371" width="1" height="1" fill="#d8d8d8"/><rect x="366" y="371" width="1" height="1" fill="#d8d8d8"/><rect x="386" y="371" width="1" height="1" fill="#d8d8d8"/><rect x="406" y="371" width="1" height="1" fill="#d8d8d8"/><rect x="426" y="371" width="1" height="1" fill="#d8d8d8"/><rect x="446" y="371" width="1" height="1" fill="#d8d8d8"/><rect x="466" y="371" width="1" height="1" fill="#d8d8d8"/><rect x="486" y="371" width="1" height="1" fill="#d8d8d8"/><rect x="506" y="371" width="1" height="1" fill="#d8d8d8"/><rect x="527" y="371" width="1" height="1" fill="#d8d8d8"/><rect x="547" y="371" width="1" height="1" fill="#d8d8d8"/><rect x="567" y="371" width="1" height="1" fill="#d8d8d8"/><rect x="587" y="371" width="1" height="1" fill="#d8d8d8"/><rect x="607" y="371" width="1" height="1" fill="#d8d8d8"/><rect x="627" y="371" width="1" height="1" fill="#d8d8d8"/><rect x="647" y="371" width="1" height="1" fill="#d8d8d8"/><rect x="667" y="371" width="1" height="1" fill="#d8d8d8"/><rect x="687" y="371" width="1" height="1" fill="#d8d8d8"/><rect x="708" y="371" width="1" height="1" fill="#d8d8d8"/><rect x="728" y="371" width="1" height="1" fill="#d8d8d8"/><rect x="748" y="371" width="1" height="1" fill="#d8d8d8"/><rect x="768" y="371" width="1" height="1" fill="#d8d8d8"/><rect x="788" y="371" width="1" height="1" fill="#d8d8d8"/><rect x="808" y="371" width="1" height="1" fill="#d8d8d8"/><rect x="828" y="371" width="1" height="1" fill="#d8d8d8"/><rect x="848" y="371" width="1" height="1" fill="#d8d8d8"/><rect x="869" y="371" width="1" height="1" fill="#d8d8d8"/><rect x="889" y="371" width="1" height="1" fill="#d8d8d8"/><rect x="909" y="371" width="1" height="1" fill="#d8d8d8"/><rect x="929" y="371" width="1" height="1" fill="#d8d8d8"/><rect x="949" y="371" width="1" height="1" fill="#d8d8d8"/><rect x="969" y="371" width="1" height="1" fill="#d8d8d8"/><rect x="989" y="371" width="1" height="1" fill="#d8d8d8"/><rect x="1009" y="371" width="1" height="1" fill="#d8d8d8"/><rect x="44" y="216" width="1" height="1" fill="#d8d8d8"/><rect x="64" y="216" width="1" height="1" fill="#d8d8d8"/><rect x="84" y="216" width="1" height="1" fill="#d8d8d8"/><rect x="104" y="216" width="1" height="1" fill="#d8d8d8"/><rect x="124" y="216" width="1" height="1" fill="#d8d8d8"/><rect x="144" y="216" width="1" height="1" fill="#d8d8d8"/><rect x="164" y="216" width="1" height="1" fill="#d8d8d8"/><rect x="184" y="216" width="1" height="1" fill="#d8d8d8"/><rect x="205" y="216" width="1" height="1" fill="#d8d8d8"/><rect x="225" y="216" width="1" height="1" fill="#d8d8d8"/><rect x="245" y="216" width="1" height="1" fill="#d8d8d8"/><rect x="265" y="216" width="1" height="1" fill="#d8d8d8"/><rect x="285" y="216" width="1" height="1" fill="#d8d8d8"/><rect x="305" y="216" width="1" height="1" fill="#d8d8d8"/><rect x="325" y="216" width="1" height="1" fill="#d8d8d8"/><rect x="345" y="216" width="1" height="1" fill="#d8d8d8"/><rect x="366" y="216" width="1" height="1" fill="#d8d8d8"/><rect x="386" y="216" width="1" height="1" fill="#d8d8d8"/><rect x="406" y="216" width="1" height="1" fill="#d8d8d8"/><rect x="426" y="216" width="1" height="1" fill="#d8d8d8"/><rect x="446" y="216" width="1" height="1" fill="#d8d8d8"/><rect x="466" y="216" width="1" height="1" fill="#d8d8d8"/><rect x="486" y="216" width="1" height="1" fill="#d8d8d8"/><rect x="506" y="216" width="1" height="1" fill="#d8d8d8"/><rect x="527" y="216" width="1" height="1" fill="#d8d8d8"/><rect x="547" y="216" width="1" height="1" fill="#d8d8d8"/><rect x="567" y="216" width="1" height="1" fill="#d8d8d8"/><rect x="587" y="216" width="1" height="1" fill="#d8d8d8"/><rect x="607" y="216" width="1" height="1" fill="#d8d8d8"/><rect x="627" y="216" width="1" height="1" fill="#d8d8d8"/><rect x="647" y="216" width="1" height="1" fill="#d8d8d8"/><rect x="667" y="216" width="1" height="1" fill="#d8d8d8"/><rect x="687" y="216" width="1" height="1" fill="#d8d8d8"/><rect x="708" y="216" width="1" height="1" fill="#d8d8d8"/><rect x="728" y="216" width="1" height="1" fill="#d8d8d8"/><rect x="748" y="216" width="1" height="1" fill="#d8d8d8"/><rect x="768" y="216" width="1" height="1" fill="#d8d8d8"/><rect x="788" y="216" width="1" height="1" fill="#d8d8d8"/><rect x="808" y="216" width="1" height="1" fill="#d8d8d8"/><rect x="828" y="216" width="1" height="1" fill="#d8d8d8"/><rect x="848" y="216" width="1" height="1" fill="#d8d8d8"/><rect x="869" y="216" width="1" height="1" fill="#d8d8d8"/><rect x="889" y="216" width="1" height="1" fill="#d8d8d8"/><rect x="909" y="216" width="1" height="1" fill="#d8d8d8"/><rect x="929" y="216" width="1" height="1" fill="#d8d8d8"/><rect x="949" y="216" width="1" height="1" fill="#d8d8d8"/><rect x="969" y="216" width="1" height="1" fill="#d8d8d8"/><rect x="989" y="216" width="1" height="1" fill="#d8d8d8"/><rect x="1009" y="216" width="1" height="1" fill="#d8d8d8"/><rect x="44" y="604" width="1" height="1" fill="#d8d8d8"/><rect x="64" y="604" width="1" height="1" fill="#d8d8d8"/><rect x="84" y="604" width="1" height="1" fill="#d8d8d8"/><rect x="104" y="604" width="1" height="1" fill="#d8d8d8"/><rect x="124" y="604" width="1" height="1" fill="#d8d8d8"/><rect x="144" y="604" width="1" height="1" fill="#d8d8d8"/><rect x="164" y="604" width="1" height="1" fill="#d8d8d8"/><rect x="184" y="604" width="1" height="1" fill="#d8d8d8"/><rect x="205" y="604" width="1" height="1" fill="#d8d8d8"/><rect x="225" y="604" width="1" height="1" fill="#d8d8d8"/><rect x="245" y="604" width="1" height="1" fill="#d8d8d8"/><rect x="265" y="604" width="1" height="1" fill="#d8d8d8"/><rect x="285" y="604" width="1" height="1" fill="#d8d8d8"/><rect x="305" y="604" width="1" height="1" fill="#d8d8d8"/><rect x="325" y="604" width="1" height="1" fill="#d8d8d8"/><rect x="345" y="604" width="1" height="1" fill="#d8d8d8"/><rect x="366" y="604" width="1" height="1" fill="#d8d8d8"/><rect x="386" y="604" width="1" height="1" fill="#d8d8d8"/><rect x="406" y="604" width="1" height="1" fill="#d8d8d8"/><rect x="426" y="604" width="1" height="1" fill="#d8d8d8"/><rect x="446" y="604" width="1" height="1" fill="#d8d8d8"/><rect x="466" y="604" width="1" height="1" fill="#d8d8d8"/><rect x="486" y="604" width="1" height="1" fill="#d8d8d8"/><rect x="506" y="604" width="1" height="1" fill="#d8d8d8"/><rect x="527" y="604" width="1" height="1" fill="#d8d8d8"/><rect x="547" y="604" width="1" height="1" fill="#d8d8d8"/><rect x="567" y="604" width="1" height="1" fill="#d8d8d8"/><rect x="587" y="604" width="1" height="1" fill="#d8d8d8"/><rect x="607" y="604" width="1" height="1" fill="#d8d8d8"/><rect x="627" y="604" width="1" height="1" fill="#d8d8d8"/><rect x="647" y="604" width="1" height="1" fill="#d8d8d8"/><rect x="667" y="604" width="1" height="1" fill="#d8d8d8"/><rect x="687" y="604" width="1" height="1" fill="#d8d8d8"/><rect x="708" y="604" width="1" height="1" fill="#d8d8d8"/><rect x="728" y="604" width="1" height="1" fill="#d8d8d8"/><rect x="748" y="604" width="1" height="1" fill="#d8d8d8"/><rect x="768" y="604" width="1" height="1" fill="#d8d8d8"/><rect x="788" y="604" width="1" height="1" fill="#d8d8d8"/><rect x="808" y="604" width="1" height="1" fill="#d8d8d8"/><rect x="828" y="604" width="1" height="1" fill="#d8d8d8"/><rect x="848" y="604" width="1" height="1" fill="#d8d8d8"/><rect x="869" y="604" width="1" height="1" fill="#d8d8d8"/><rect x="889" y="604" width="1" height="1" fill="#d8d8d8"/><rect x="909" y="604" width="1" height="1" fill="#d8d8d8"/><rect x="929" y="604" width="1" height="1" fill="#d8d8d8"/><rect x="949" y="604" width="1" height="1" fill="#d8d8d8"/><rect x="969" y="604" width="1" height="1" fill="#d8d8d8"/><rect x="989" y="604" width="1" height="1" fill="#d8d8d8"/><rect x="1009" y="604" width="1" height="1" fill="#d8d8d8"/><rect x="472" y="381" width="1" height="1" fill="#84d2dc"/><rect x="593" y="501" width="1" height="1" fill="#84d2dc"/><rect x="464" y="518" width="1" height="1" fill="#84d2dc"/><rect x="545" y="370" width="1" height="1" fill="#84d2dc"/><rect x="556" y="526" width="1" height="1" fill="#84d2dc"/><rect x="520" y="529" width="1" height="1" fill="#84d2dc"/><rect x="419" y="465" width="1" height="1" fill="#84d2dc"/><rect x="439" y="496" width="1" height="1" fill="#84d2dc"/><rect x="430" y="482" width="1" height="1" fill="#84d2dc"/><rect x="456" y="389" width="1" height="1" fill="#84d2dc"/><rect x="500" y="370" width="1" height="1" fill="#84d2dc"/><rect x="610" y="493" width="1" height="1" fill="#84d2dc"/><rect x="554" y="375" width="1" height="1" fill="#84d2dc"/><rect x="528" y="526" width="1" height="1" fill="#84d2dc"/><rect x="447" y="510" width="1" height="1" fill="#84d2dc"/><rect x="548" y="526" width="1" height="1" fill="#84d2dc"/><rect x="489" y="526" width="1" height="1" fill="#84d2dc"/><rect x="590" y="384" width="1" height="1" fill="#84d2dc"/><rect x="587" y="386" width="1" height="1" fill="#84d2dc"/><rect x="430" y="487" width="1" height="1" fill="#84d2dc"/><rect x="615" y="423" width="1" height="1" fill="#84d2dc"/><rect x="500" y="367" width="1" height="1" fill="#84d2dc"/><rect x="593" y="504" width="1" height="1" fill="#84d2dc"/><rect x="570" y="521" width="1" height="1" fill="#84d2dc"/><rect x="568" y="521" width="1" height="1" fill="#84d2dc"/><rect x="425" y="412" width="1" height="1" fill="#84d2dc"/><rect x="601" y="398" width="1" height="1" fill="#84d2dc"/><rect x="551" y="521" width="1" height="1" fill="#84d2dc"/><rect x="596" y="501" width="1" height="1" fill="#84d2dc"/><rect x="428" y="423" width="1" height="1" fill="#84d2dc"/><rect x="419" y="445" width="1" height="1" fill="#84d2dc"/><rect x="584" y="384" width="1" height="1" fill="#84d2dc"/><rect x="425" y="431" width="1" height="1" fill="#84d2dc"/><rect x="590" y="392" width="1" height="1" fill="#84d2dc"/><rect x="425" y="423" width="1" height="1" fill="#84d2dc"/><rect x="612" y="484" width="1" height="1" fill="#84d2dc"/><rect x="615" y="428" width="1" height="1" fill="#84d2dc"/><rect x="422" y="476" width="1" height="1" fill="#84d2dc"/><rect x="584" y="510" width="1" height="1" fill="#84d2dc"/><rect x="512" y="524" width="1" height="1" fill="#84d2dc"/><rect x="621" y="448" width="1" height="1" fill="#84d2dc"/><rect x="568" y="375" width="1" height="1" fill="#84d2dc"/><rect x="428" y="482" width="1" height="1" fill="#84d2dc"/><rect x="573" y="378" width="1" height="1" fill="#84d2dc"/><rect x="450" y="507" width="1" height="1" fill="#84d2dc"/><rect x="615" y="420" width="1" height="1" fill="#84d2dc"/><rect x="442" y="389" width="1" height="1" fill="#84d2dc"/><rect x="618" y="423" width="1" height="1" fill="#84d2dc"/><rect x="422" y="442" width="1" height="1" fill="#84d2dc"/><rect x="559" y="521" width="1" height="1" fill="#84d2dc"/><rect x="422" y="420" width="1" height="1" fill="#84d2dc"/><rect x="512" y="370" width="1" height="1" fill="#84d2dc"/><rect x="458" y="518" width="1" height="1" fill="#84d2dc"/><rect x="542" y="372" width="1" height="1" fill="#84d2dc"/><rect x="540" y="524" width="1" height="1" fill="#84d2dc"/><rect x="447" y="392" width="1" height="1" fill="#84d2dc"/><rect x="436" y="498" width="1" height="1" fill="#84d2dc"/><rect x="607" y="484" width="1" height="1" fill="#84d2dc"/><rect x="551" y="370" width="1" height="1" fill="#84d2dc"/><rect x="584" y="386" width="1" height="1" fill="#84d2dc"/><rect x="593" y="510" width="1" height="1" fill="#84d2dc"/><rect x="618" y="440" width="1" height="1" fill="#84d2dc"/><rect x="422" y="428" width="1" height="1" fill="#84d2dc"/><rect x="618" y="451" width="1" height="1" fill="#84d2dc"/><rect x="489" y="375" width="1" height="1" fill="#84d2dc"/><rect x="439" y="498" width="1" height="1" fill="#84d2dc"/><rect x="453" y="510" width="1" height="1" fill="#84d2dc"/><rect x="428" y="414" width="1" height="1" fill="#84d2dc"/><rect x="545" y="526" width="1" height="1" fill="#84d2dc"/><rect x="610" y="412" width="1" height="1" fill="#84d2dc"/><rect x="495" y="524" width="1" height="1" fill="#84d2dc"/><rect x="428" y="406" width="1" height="1" fill="#84d2dc"/><rect x="489" y="370" width="1" height="1" fill="#84d2dc"/><rect x="444" y="389" width="1" height="1" fill="#84d2dc"/><rect x="517" y="526" width="1" height="1" fill="#84d2dc"/><rect x="618" y="468" width="1" height="1" fill="#84d2dc"/><rect x="579" y="510" width="1" height="1" fill="#84d2dc"/><rect x="447" y="386" width="1" height="1" fill="#84d2dc"/><rect x="444" y="392" width="1" height="1" fill="#84d2dc"/><rect x="461" y="515" width="1" height="1" fill="#84d2dc"/><rect x="416" y="462" width="1" height="1" fill="#84d2dc"/><rect x="509" y="526" width="1" height="1" fill="#84d2dc"/><rect x="607" y="493" width="1" height="1" fill="#84d2dc"/><rect x="573" y="518" width="1" height="1" fill="#84d2dc"/><rect x="492" y="529" width="1" height="1" fill="#84d2dc"/><rect x="492" y="526" width="1" height="1" fill="#84d2dc"/><rect x="478" y="372" width="1" height="1" fill="#84d2dc"/><rect x="579" y="512" width="1" height="1" fill="#84d2dc"/><rect x="470" y="378" width="1" height="1" fill="#84d2dc"/><rect x="601" y="400" width="1" height="1" fill="#84d2dc"/><rect x="576" y="515" width="1" height="1" fill="#84d2dc"/><rect x="540" y="526" width="1" height="1" fill="#84d2dc"/><rect x="598" y="496" width="1" height="1" fill="#84d2dc"/><rect x="607" y="487" width="1" height="1" fill="#84d2dc"/><rect x="579" y="518" width="1" height="1" fill="#84d2dc"/><rect x="419" y="451" width="1" height="1" fill="#84d2dc"/><rect x="584" y="515" width="1" height="1" fill="#84d2dc"/><rect x="607" y="406" width="1" height="1" fill="#84d2dc"/><rect x="498" y="370" width="1" height="1" fill="#84d2dc"/><rect x="576" y="381" width="1" height="1" fill="#84d2dc"/><rect x="467" y="521" width="1" height="1" fill="#84d2dc"/><rect x="601" y="493" width="1" height="1" fill="#84d2dc"/><rect x="540" y="367" width="1" height="1" fill="#84d2dc"/><rect x="514" y="364" width="1" height="1" fill="#84d2dc"/><rect x="615" y="482" width="1" height="1" fill="#84d2dc"/><rect x="467" y="518" width="1" height="1" fill="#84d2dc"/><rect x="601" y="395" width="1" height="1" fill="#84d2dc"/><rect x="618" y="479" width="1" height="1" fill="#84d2dc"/><rect x="495" y="526" width="1" height="1" fill="#84d2dc"/><rect x="472" y="518" width="1" height="1" fill="#84d2dc"/><rect x="562" y="521" width="1" height="1" fill="#84d2dc"/><rect x="425" y="468" width="1" height="1" fill="#84d2dc"/><rect x="537" y="529" width="1" height="1" fill="#84d2dc"/><rect x="526" y="370" width="1" height="1" fill="#84d2dc"/><rect x="621" y="454" width="1" height="1" fill="#84d2dc"/><rect x="430" y="403" width="1" height="1" fill="#84d2dc"/><rect x="568" y="518" width="1" height="1" fill="#84d2dc"/><rect x="618" y="465" width="1" height="1" fill="#84d2dc"/><rect x="554" y="521" width="1" height="1" fill="#84d2dc"/><rect x="447" y="501" width="1" height="1" fill="#84d2dc"/><rect x="621" y="451" width="1" height="1" fill="#84d2dc"/><rect x="447" y="389" width="1" height="1" fill="#84d2dc"/><rect x="419" y="423" width="1" height="1" fill="#84d2dc"/><rect x="478" y="375" width="1" height="1" fill="#84d2dc"/><rect x="422" y="473" width="1" height="1" fill="#84d2dc"/><rect x="428" y="476" width="1" height="1" fill="#84d2dc"/><rect x="615" y="479" width="1" height="1" fill="#84d2dc"/><rect x="531" y="372" width="1" height="1" fill="#84d2dc"/><rect x="433" y="406" width="1" height="1" fill="#84d2dc"/><rect x="587" y="504" width="1" height="1" fill="#84d2dc"/><rect x="422" y="431" width="1" height="1" fill="#84d2dc"/><rect x="618" y="473" width="1" height="1" fill="#84d2dc"/><rect x="551" y="375" width="1" height="1" fill="#84d2dc"/><rect x="582" y="384" width="1" height="1" fill="#84d2dc"/><rect x="534" y="372" width="1" height="1" fill="#84d2dc"/><rect x="596" y="395" width="1" height="1" fill="#84d2dc"/><rect x="442" y="400" width="1" height="1" fill="#84d2dc"/><rect x="556" y="372" width="1" height="1" fill="#84d2dc"/><rect x="419" y="434" width="1" height="1" fill="#84d2dc"/><rect x="517" y="364" width="1" height="1" fill="#84d2dc"/><rect x="621" y="462" width="1" height="1" fill="#84d2dc"/><rect x="492" y="367" width="1" height="1" fill="#84d2dc"/><rect x="579" y="378" width="1" height="1" fill="#84d2dc"/><rect x="587" y="510" width="1" height="1" fill="#84d2dc"/><rect x="442" y="498" width="1" height="1" fill="#84d2dc"/><rect x="596" y="398" width="1" height="1" fill="#84d2dc"/><rect x="612" y="473" width="1" height="1" fill="#84d2dc"/><rect x="610" y="414" width="1" height="1" fill="#84d2dc"/><rect x="621" y="428" width="1" height="1" fill="#84d2dc"/><rect x="416" y="459" width="1" height="1" fill="#84d2dc"/><rect x="506" y="367" width="1" height="1" fill="#84d2dc"/><rect x="514" y="367" width="1" height="1" fill="#84d2dc"/><rect x="562" y="518" width="1" height="1" fill="#84d2dc"/><rect x="453" y="389" width="1" height="1" fill="#84d2dc"/><rect x="570" y="518" width="1" height="1" fill="#84d2dc"/><rect x="486" y="521" width="1" height="1" fill="#84d2dc"/><rect x="559" y="375" width="1" height="1" fill="#84d2dc"/><rect x="598" y="501" width="1" height="1" fill="#84d2dc"/><rect x="556" y="370" width="1" height="1" fill="#84d2dc"/><rect x="587" y="507" width="1" height="1" fill="#84d2dc"/><rect x="422" y="470" width="1" height="1" fill="#84d2dc"/><rect x="458" y="512" width="1" height="1" fill="#84d2dc"/><rect x="520" y="367" width="1" height="1" fill="#84d2dc"/><rect x="436" y="400" width="1" height="1" fill="#84d2dc"/><rect x="495" y="370" width="1" height="1" fill="#84d2dc"/><rect x="503" y="526" width="1" height="1" fill="#84d2dc"/><rect x="442" y="398" width="1" height="1" fill="#84d2dc"/><rect x="509" y="370" width="1" height="1" fill="#84d2dc"/><rect x="419" y="440" width="1" height="1" fill="#84d2dc"/><rect x="624" y="437" width="1" height="1" fill="#84d2dc"/><rect x="433" y="412" width="1" height="1" fill="#84d2dc"/><rect x="604" y="498" width="1" height="1" fill="#84d2dc"/><rect x="559" y="370" width="1" height="1" fill="#84d2dc"/><rect x="419" y="442" width="1" height="1" fill="#84d2dc"/><rect x="478" y="521" width="1" height="1" fill="#84d2dc"/><rect x="422" y="437" width="1" height="1" fill="#84d2dc"/><rect x="461" y="518" width="1" height="1" fill="#84d2dc"/><rect x="596" y="392" width="1" height="1" fill="#84d2dc"/><rect x="618" y="431" width="1" height="1" fill="#84d2dc"/><rect x="506" y="526" width="1" height="1" fill="#84d2dc"/><rect x="584" y="381" width="1" height="1" fill="#84d2dc"/><rect x="596" y="507" width="1" height="1" fill="#84d2dc"/><rect x="604" y="403" width="1" height="1" fill="#84d2dc"/><rect x="618" y="417" width="1" height="1" fill="#84d2dc"/><rect x="422" y="468" width="1" height="1" fill="#84d2dc"/><rect x="621" y="465" width="1" height="1" fill="#84d2dc"/><rect x="610" y="409" width="1" height="1" fill="#84d2dc"/><rect x="464" y="515" width="1" height="1" fill="#84d2dc"/><rect x="612" y="482" width="1" height="1" fill="#84d2dc"/><rect x="607" y="496" width="1" height="1" fill="#84d2dc"/><rect x="422" y="426" width="1" height="1" fill="#84d2dc"/><rect x="618" y="428" width="1" height="1" fill="#84d2dc"/><rect x="470" y="375" width="1" height="1" fill="#84d2dc"/><rect x="486" y="524" width="1" height="1" fill="#84d2dc"/><rect x="467" y="375" width="1" height="1" fill="#84d2dc"/><rect x="528" y="370" width="1" height="1" fill="#84d2dc"/><rect x="512" y="526" width="1" height="1" fill="#84d2dc"/><rect x="458" y="381" width="1" height="1" fill="#84d2dc"/><rect x="621" y="445" width="1" height="1" fill="#84d2dc"/><rect x="548" y="370" width="1" height="1" fill="#84d2dc"/><rect x="621" y="440" width="1" height="1" fill="#84d2dc"/><rect x="442" y="496" width="1" height="1" fill="#84d2dc"/><rect x="458" y="510" width="1" height="1" fill="#84d2dc"/><rect x="461" y="378" width="1" height="1" fill="#84d2dc"/><rect x="498" y="526" width="1" height="1" fill="#84d2dc"/><rect x="621" y="456" width="1" height="1" fill="#84d2dc"/><rect x="596" y="389" width="1" height="1" fill="#84d2dc"/><rect x="433" y="496" width="1" height="1" fill="#84d2dc"/><rect x="554" y="372" width="1" height="1" fill="#84d2dc"/><rect x="565" y="518" width="1" height="1" fill="#84d2dc"/><rect x="430" y="484" width="1" height="1" fill="#84d2dc"/><rect x="534" y="526" width="1" height="1" fill="#84d2dc"/><rect x="596" y="504" width="1" height="1" fill="#84d2dc"/><rect x="475" y="375" width="1" height="1" fill="#84d2dc"/><rect x="470" y="518" width="1" height="1" fill="#84d2dc"/><rect x="584" y="512" width="1" height="1" fill="#84d2dc"/><rect x="425" y="417" width="1" height="1" fill="#84d2dc"/><rect x="447" y="504" width="1" height="1" fill="#84d2dc"/><rect x="486" y="370" width="1" height="1" fill="#84d2dc"/><rect x="439" y="403" width="1" height="1" fill="#84d2dc"/><rect x="598" y="498" width="1" height="1" fill="#84d2dc"/><rect x="419" y="462" width="1" height="1" fill="#84d2dc"/><rect x="612" y="420" width="1" height="1" fill="#84d2dc"/><rect x="444" y="398" width="1" height="1" fill="#84d2dc"/><rect x="439" y="398" width="1" height="1" fill="#84d2dc"/><rect x="450" y="510" width="1" height="1" fill="#84d2dc"/><rect x="430" y="414" width="1" height="1" fill="#84d2dc"/><rect x="618" y="445" width="1" height="1" fill="#84d2dc"/><rect x="607" y="409" width="1" height="1" fill="#84d2dc"/><rect x="621" y="434" width="1" height="1" fill="#84d2dc"/><rect x="453" y="386" width="1" height="1" fill="#84d2dc"/><rect x="456" y="510" width="1" height="1" fill="#84d2dc"/><rect x="551" y="524" width="1" height="1" fill="#84d2dc"/><rect x="596" y="498" width="1" height="1" fill="#84d2dc"/></svg>
<svg style="left:4px;top:444px" width="20" height="13" viewBox="0 0 20 13">
<path d="M0.5 0.5 H12.5 L18.5 6 L12.5 12 H0.5 Z" fill="#00f0f0"/>
</svg>
<div class="t " style="left:8.7px;top:445.27px;font-size:10.5px;color:#000;">2</div>
<div class="r" style="left:24px;top:764px;width:92px;height:18px;background:#000"></div>
<div class="r" style="left:25px;top:766px;width:27px;height:15px;background:#ffff00"></div>
<div class="t " style="left:25.5px;top:768.29px;font-size:12.6px;color:#000;">CH1</div>
<svg style="left:53px;top:768px" width="12" height="12" viewBox="0 0 12 12"><path d="M1.5 7 V4.8 L3.5 2 L5.5 4.8 V6.5 L7.5 9.2 L9.7 6.5 V4" fill="none" stroke="#f0f0c8" stroke-width="1"/></svg>
<div class="t " style="left:69px;top:768.29px;font-size:12.6px;color:#f0f020;">500mV</div>
<div class="r" style="left:134px;top:764px;width:92px;height:18px;background:#000"></div>
<div class="t " style="left:136px;top:768.03px;font-size:12.9px;color:#33ccdd;">CH2</div>
<svg style="left:163px;top:768px" width="12" height="12" viewBox="0 0 12 12"><path d="M1.5 7 V4.8 L3.5 2 L5.5 4.8 V6.5 L7.5 9.2 L9.7 6.5 V4" fill="none" stroke="#33ccdd" stroke-width="1"/></svg>
<div class="t " style="left:178.5px;top:768.29px;font-size:12.6px;color:#33ccdd;">500mV</div>
<div class="r" style="left:940px;top:764px;width:90px;height:19px;background:#000"></div>
<div class="t " style="left:942px;top:767.59px;font-size:12.6px;color:#e8902c;">Time: 500.0us</div>
<div class="r" style="left:1053px;top:93px;width:193px;height:695px;background:#f0f0f0"></div>
<div class="r" style="left:1053px;top:92px;width:193px;height:1px;background:#a0a0a0"></div>
<div class="t " style="left:1064px;top:102.98px;font-size:10.5px;color:#000;">Connect:</div>
<svg style="left:1110px;top:97px" width="24" height="24" viewBox="0 0 24 24"><circle cx="11.7" cy="11.5" r="10.2" fill="#ff8000" stroke="#b05a10" stroke-width="0.9"/></svg>
<div class="r" style="left:1053px;top:122px;width:193px;height:1px;background:#dcdcdc"></div>
<div class="r" style="left:1053px;top:122px;width:1px;height:666px;background:#e8e8e8"></div>
<div class="r" style="left:1231px;top:123px;width:1px;height:665px;background:#ffffff"></div>
<div class="r" style="left:1232px;top:123px;width:13px;height:665px;background:#f0f0f0"></div>
<svg style="left:1234px;top:127px" width="11" height="10" viewBox="0 0 11 10"><path d="M1.8 7.3 L5.5 3.6 L9.2 7.3" fill="none" stroke="#4a4a4a" stroke-width="1.7"/></svg>
<div class="r" style="left:1232px;top:140px;width:13px;height:541px;background:#cdcdcd"></div>
<div class="r" style="left:1059px;top:134px;width:168px;height:110px;border:1px solid #dcdcdc;border-top-color:#dcdcdc"></div>
<div class="t" style="left:1065.5px;top:128px;height:12px;background:#f0f0f0;font-size:10.6px;padding:0 2px;color:transparent">Horizontal</div>
<div class="t " style="left:1068.5px;top:128.79px;font-size:10.6px;color:#000;">Horizontal</div>
<div class="t " style="left:1062.5px;top:151.03px;font-size:10.2px;color:#000;">Time / DIV</div>
<div class="r" style="left:1062px;top:167px;width:68px;height:22px;background:#e5e5e5;border:1px solid #adadad"></div>
<div class="t " style="left:1066px;top:172.99px;font-size:10.6px;color:#000;">500.0us</div>
<svg style="left:1117px;top:175.0px" width="10" height="6" viewBox="0 0 10 6"><path d="M0.5 0.8 L4.5 4.8 L8.5 0.8" fill="none" stroke="#404040" stroke-width="1.1"/></svg>
<div class="t " style="left:1062.5px;top:197.67px;font-size:10.5px;color:#000;">Format</div>
<div class="r" style="left:1062px;top:216px;width:68px;height:22px;background:#e5e5e5;border:1px solid #adadad"></div>
<div class="t " style="left:1066px;top:222.49px;font-size:10.6px;color:#000;">X - Y</div>
<svg style="left:1117px;top:224.0px" width="10" height="6" viewBox="0 0 10 6"><path d="M0.5 0.8 L4.5 4.8 L8.5 0.8" fill="none" stroke="#404040" stroke-width="1.1"/></svg>
<svg style="left:1137.3px;top:147.8px" width="84" height="84" viewBox="-42 -42 84 84">
<defs><linearGradient id="krb" x1="0.2" y1="0" x2="0.5" y2="1"><stop offset="0" stop-color="#d2d2d2"/><stop offset="0.6" stop-color="#a8a8a8"/><stop offset="1" stop-color="#8a8a8a"/></linearGradient></defs>
<path d="M-26.9 26.9 A38 38 0 1 1 26.9 26.9" fill="none" stroke="#111" stroke-width="1"/>
<path d="M-25.9 25.9 A36.6 36.6 0 1 1 25.9 25.9" fill="none" stroke="#fff" stroke-width="1.3"/>
<circle cx="0" cy="0" r="35.3" fill="url(#krb)" stroke="#6a6a6a" stroke-width="0.7"/>
<circle cx="0" cy="0" r="28.9" fill="#0000a0"/>
<circle cx="0" cy="0" r="27.70" fill="#0000cc"/>
<path d="M-31.8 31.2 L-25.2 25 M31.8 31.2 L25.2 25" stroke="#111" stroke-width="1.5"/>
<path d="M4.4 -23 L1.3 -7.4" stroke="#d8d0a0" stroke-width="1.9"/>
</svg>
<div class="r" style="left:1059px;top:258px;width:168px;height:150px;border:1px solid #dcdcdc;border-top-color:#dcdcdc"></div>
<div class="t" style="left:1065.3px;top:252px;height:12px;background:#f0f0f0;font-size:10.9px;padding:0 2px;color:transparent">Vertical</div>
<div class="t " style="left:1068.3px;top:252.54px;font-size:10.9px;color:#000;">Vertical</div>
<div class="r" style="left:1062px;top:275px;width:68px;height:22px;background:#e5e5e5;border:1px solid #adadad"></div>
<div class="t " style="left:1066px;top:281.49px;font-size:10.6px;color:#000;">CH1</div>
<svg style="left:1117px;top:283.0px" width="10" height="6" viewBox="0 0 10 6"><path d="M0.5 0.8 L4.5 4.8 L8.5 0.8" fill="none" stroke="#404040" stroke-width="1.1"/></svg>
<div class="r" style="left:1135px;top:277px;width:13px;height:13px;background:#fff;border:1px solid #333"></div>
<svg style="left:1136px;top:278px" width="11" height="11" viewBox="0 0 11 11"><path d="M1.5 5.5 L4.2 8.3 L9.5 2" fill="none" stroke="#222" stroke-width="1.3"/></svg>
<div class="t " style="left:1151.3px;top:279.03px;font-size:10.2px;color:#000;">ON/OFF</div>
<div class="r" style="left:1062px;top:303px;width:68px;height:21px;background:#fff;border:1px solid #adadad"></div>
<div class="t " style="left:1066px;top:308.99px;font-size:10.6px;color:#000;">500mV</div>
<div class="r" style="left:1112px;top:304px;width:17px;height:19px;background:#f0f0f0"></div>
<div class="r" style="left:1113px;top:305px;width:15px;height:8px;background:#f5f5f5;border:1px solid #d0d0d0"></div>
<div class="r" style="left:1113px;top:314px;width:15px;height:8px;background:#f5f5f5;border:1px solid #d0d0d0"></div>
<svg style="left:1116px;top:306px" width="9" height="15" viewBox="0 0 9 15"><path d="M1 5.5 L4.5 2 L8 5.5 Z M1 10 L4.5 13.5 L8 10 Z" fill="#111"/></svg>
<div class="r" style="left:1062px;top:330px;width:68px;height:22px;background:#e5e5e5;border:1px solid #adadad"></div>
<div class="t " style="left:1066px;top:336.49px;font-size:10.6px;color:#000;">AC</div>
<svg style="left:1117px;top:338.0px" width="10" height="6" viewBox="0 0 10 6"><path d="M0.5 0.8 L4.5 4.8 L8.5 0.8" fill="none" stroke="#404040" stroke-width="1.1"/></svg>
<div class="r" style="left:1062px;top:358px;width:68px;height:22px;background:#e5e5e5;border:1px solid #adadad"></div>
<div class="t " style="left:1066px;top:364.49px;font-size:10.6px;color:#000;">x1</div>
<svg style="left:1117px;top:366.0px" width="10" height="6" viewBox="0 0 10 6"><path d="M0.5 0.8 L4.5 4.8 L8.5 0.8" fill="none" stroke="#404040" stroke-width="1.1"/></svg>
<svg style="left:1137.3px;top:298.2px" width="84" height="84" viewBox="-42 -42 84 84">
<defs><linearGradient id="kry" x1="0.2" y1="0" x2="0.5" y2="1"><stop offset="0" stop-color="#d2d2d2"/><stop offset="0.6" stop-color="#a8a8a8"/><stop offset="1" stop-color="#8a8a8a"/></linearGradient></defs>
<path d="M-26.9 26.9 A38 38 0 1 1 26.9 26.9" fill="none" stroke="#111" stroke-width="1"/>
<path d="M-25.9 25.9 A36.6 36.6 0 1 1 25.9 25.9" fill="none" stroke="#fff" stroke-width="1.3"/>
<circle cx="0" cy="0" r="35.3" fill="url(#kry)" stroke="#6a6a6a" stroke-width="0.7"/>
<circle cx="0" cy="0" r="28.9" fill="#8c8c00"/>
<circle cx="0" cy="0" r="26.30" fill="#ffff00"/>
<path d="M-31.8 31.2 L-25.2 25 M31.8 31.2 L25.2 25" stroke="#111" stroke-width="1.5"/>
<path d="M-14.3 -19.2 L-4.9 -6.5" stroke="#404050" stroke-width="1.9"/>
</svg>
<div class="r" style="left:1059px;top:421px;width:168px;height:240px;border:1px solid #dcdcdc;border-top-color:#dcdcdc"></div>
<div class="t" style="left:1065.3px;top:415px;height:12px;background:#f0f0f0;font-size:10.6px;padding:0 2px;color:transparent">Trigger</div>
<div class="t " style="left:1068.3px;top:415.79px;font-size:10.6px;color:#000;">Trigger</div>
<div class="t " style="left:1062.5px;top:441.52px;font-size:10.8px;color:#000;">Trigger Mode</div>
<div class="r" style="left:1149px;top:436px;width:68px;height:22px;background:#e5e5e5;border:1px solid #adadad"></div>
<div class="t " style="left:1153px;top:442.49px;font-size:10.6px;color:#000;">Edge</div>
<svg style="left:1204px;top:444.0px" width="10" height="6" viewBox="0 0 10 6"><path d="M0.5 0.8 L4.5 4.8 L8.5 0.8" fill="none" stroke="#404040" stroke-width="1.1"/></svg>
<div class="t " style="left:1062.5px;top:471.52px;font-size:10.8px;color:#000;">Trigger Sweep</div>
<div class="r" style="left:1149px;top:466px;width:68px;height:22px;background:#e5e5e5;border:1px solid #adadad"></div>
<div class="t " style="left:1153px;top:472.49px;font-size:10.6px;color:#000;">AUTO</div>
<svg style="left:1204px;top:474.0px" width="10" height="6" viewBox="0 0 10 6"><path d="M0.5 0.8 L4.5 4.8 L8.5 0.8" fill="none" stroke="#404040" stroke-width="1.1"/></svg>
<div class="t " style="left:1062.5px;top:501.72px;font-size:10.8px;color:#000;">Trigger Source</div>
<div class="r" style="left:1149px;top:496px;width:68px;height:22px;background:#e5e5e5;border:1px solid #adadad"></div>
<div class="t " style="left:1153px;top:502.49px;font-size:10.6px;color:#000;">CH1</div>
<svg style="left:1204px;top:504.0px" width="10" height="6" viewBox="0 0 10 6"><path d="M0.5 0.8 L4.5 4.8 L8.5 0.8" fill="none" stroke="#404040" stroke-width="1.1"/></svg>
<div class="t " style="left:1062.5px;top:530.72px;font-size:10.8px;color:#000;">Trigger Slope</div>
<div class="r" style="left:1149px;top:527px;width:68px;height:22px;background:#e5e5e5;border:1px solid #adadad"></div>
<div class="t " style="left:1153px;top:533.49px;font-size:10.6px;color:#000;">+</div>
<svg style="left:1204px;top:535.0px" width="10" height="6" viewBox="0 0 10 6"><path d="M0.5 0.8 L4.5 4.8 L8.5 0.8" fill="none" stroke="#404040" stroke-width="1.1"/></svg>
<div class="r" style="left:1053px;top:690px;width:178px;height:98px;background:#f0f0f0"></div>
<div class="r" style="left:1054px;top:701px;width:168px;height:100px;border:1px solid #dcdcdc;border-top-color:#dcdcdc"></div>
<div class="t" style="left:1060.2px;top:695px;height:12px;background:#f0f0f0;font-size:10.9px;padding:0 2px;color:transparent">Move Waveform</div>
<div class="t " style="left:1063.2px;top:695.63px;font-size:10.9px;color:#000;">Move Waveform</div>
<div class="t " style="left:1055.8px;top:714.99px;font-size:10.6px;color:#a0a0a0;">Length :</div>
<div class="r" style="left:1143px;top:708px;width:68px;height:19px;background:#f0f0f0;border:1px solid #fff;border-top-color:#a0a0a0;border-left-color:#a0a0a0"></div>
<div class="t " style="left:1165px;top:711.69px;font-size:10.6px;color:#a0a0a0;">4096</div>
<div class="t " style="left:1055.8px;top:748.19px;font-size:10.6px;color:#a0a0a0;">Step</div>
<div class="r" style="left:1141px;top:744px;width:69px;height:21px;background:#f2f2f2;border:1px solid #b8b8b8;box-shadow:inset 1px 1px 0 #fff"></div>
<div class="t " style="left:1155.4px;top:748.69px;font-size:10.6px;color:#6e6e6e;">1000</div>
<div class="r" style="left:1193px;top:745px;width:16px;height:9px;border:1px solid #d8d8d8"></div>
<div class="r" style="left:1193px;top:755px;width:16px;height:9px;border:1px solid #d8d8d8"></div>
<svg style="left:1197px;top:747px" width="9" height="16" viewBox="0 0 9 16"><path d="M1 5 L4.5 1.8 L8 5 Z M1 10.5 L4.5 13.7 L8 10.5 Z" fill="#707070"/></svg>
<div class="r" style="left:1067px;top:770px;width:28px;height:18px;background:#cccccc"></div>
<div class="t " style="left:1074px;top:774.50px;font-size:10px;color:#999;">|&lt;</div>
<div class="r" style="left:1098px;top:769px;width:83px;height:19px;background:#f0f0f0;border:1px solid #c8c8c8;border-bottom:none"></div>
<div class="t " style="left:1119.4px;top:773.59px;font-size:10.6px;color:#6e6e6e;">2047</div>
<div class="r" style="left:1164px;top:770px;width:16px;height:9px;border:1px solid #d8d8d8"></div>
<div class="r" style="left:1164px;top:780px;width:16px;height:8px;border:1px solid #d8d8d8;border-bottom:none"></div>
<svg style="left:1168px;top:772px" width="9" height="16" viewBox="0 0 9 16"><path d="M1 5 L4.5 1.8 L8 5 Z M1 10.5 L4.5 13.7 L8 10.5 Z" fill="#707070"/></svg>
<div class="r" style="left:1184px;top:770px;width:28px;height:18px;background:#cccccc"></div>
<div class="t " style="left:1191px;top:774.50px;font-size:10px;color:#999;">&gt;|</div>
<div class="r" style="left:1px;top:788px;width:1245px;height:19px;background:#f0f0f0"></div>
<div class="r" style="left:1053px;top:788px;width:192px;height:1px;background:#dcdcdc"></div>
<div class="t " style="left:3.5px;top:792.72px;font-size:12.8px;color:#000;">Connected</div>
<div class="r" style="left:1117px;top:790px;width:1px;height:16px;background:#d8d8d8"></div>
<div class="r" style="left:1118px;top:788px;width:107px;height:19px;overflow:hidden">
<div class="t " style="left:4px;top:4.38px;font-size:13.2px;color:#000;">28-04-2016</div>
<div class="t " style="left:78.5px;top:4.38px;font-size:13.2px;color:#000;">10:19:30</div>
</div>
<svg style="left:1234px;top:796px" width="10" height="10" viewBox="0 0 10 10"><g fill="#a8a8a8"><rect x="7" y="1" width="2" height="2"/><rect x="4" y="4" width="2" height="2"/><rect x="7" y="4" width="2" height="2"/><rect x="1" y="7" width="2" height="2"/><rect x="4" y="7" width="2" height="2"/><rect x="7" y="7" width="2" height="2"/></g></svg>
<div class="r" style="left:0px;top:0px;width:1247px;height:1px;background:#d5c8d8"></div>
<div class="r" style="left:0px;top:0px;width:1px;height:808px;background:#d5c8d8"></div>
<div class="r" style="left:1245px;top:1px;width:1px;height:806px;background:#f6eef6"></div>
<div class="r" style="left:1px;top:806px;width:1245px;height:1px;background:#f6eef6"></div>
<div class="r" style="left:1246px;top:0px;width:1px;height:808px;background:#d5c8d8"></div>
<div class="r" style="left:0px;top:807px;width:1247px;height:1px;background:#d5c8d8"></div></body></html>
